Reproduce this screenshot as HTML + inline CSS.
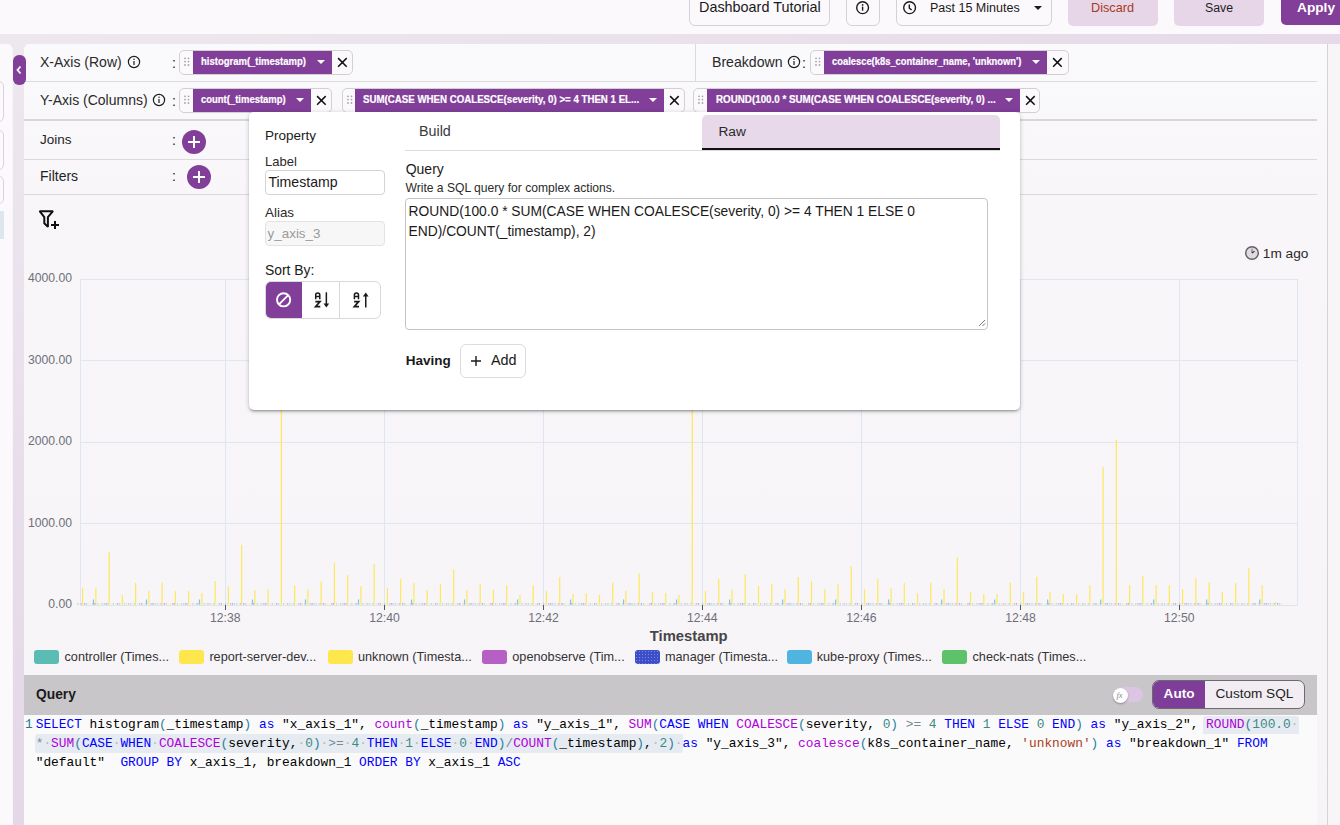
<!DOCTYPE html>
<html><head><meta charset="utf-8">
<style>
*{box-sizing:border-box;margin:0;padding:0}
html,body{width:1340px;height:825px;overflow:hidden;background:#f8f5f9;font-family:"Liberation Sans",sans-serif;color:#1f1f1f;position:relative}
.a{position:absolute}
.t{position:absolute;white-space:nowrap;line-height:1}
.btn{position:absolute;border:1px solid #d6d0d8;border-radius:6px;background:#fbf9fc}
.row{position:absolute;left:24px;width:1293px;border-bottom:1px solid #d9d6da}
.chip{position:absolute;height:25px;border:1px solid #d3d0d4;border-radius:5px;background:#fbf9fc}
.chip .p{position:absolute;top:0;bottom:0;background:#813f99}
.chip .ct{position:absolute;color:#fff;font-weight:bold;white-space:nowrap;line-height:1;-webkit-text-stroke:0.2px #fff}
.dh{position:absolute;width:6px;height:9px;top:6.5px}
.dh i{position:absolute;width:1.6px;height:1.6px;background:#a9a5aa;border-radius:1px}
.plus{position:absolute;width:24px;height:24px;border-radius:50%;background:#813f99}
.plus:before,.plus:after{content:"";position:absolute;background:#fff;left:50%;top:50%}
.plus:before{width:12px;height:2px;margin:-1px 0 0 -6px}
.plus:after{width:2px;height:12px;margin:-6px 0 0 -1px}
.code{position:absolute;left:35px;top:715.5px;font-family:"Liberation Mono",monospace;font-size:12.8px;line-height:19px;white-space:pre;color:#000}
.k{color:#0000ff}.f{color:#af00db}.n{color:#3b8a86}.s{color:#ad3c1a}.b1{color:#0431fa}.b2{color:#319331}.b3{color:#7b3814}.op{color:#000}
.ws{color:#b9b9b9}.o{color:#778899}.pr{color:#2b7fa0}
</style></head><body>

<!-- header -->
<div class="a" style="left:0;top:0;width:1340px;height:34px;background:#fbf9fc"></div>
<div class="btn" style="left:689px;top:-10px;width:141px;height:36px"></div>
<div class="t" style="left:699px;top:0.1px;font-size:14.4px;color:#1a1a1a">Dashboard Tutorial</div>
<div class="btn" style="left:846px;top:-10px;width:34px;height:36px"></div>
<svg class="a" style="left:855px;top:0px" width="16" height="16" viewBox="0 0 16 16"><circle cx="7.6" cy="7.7" r="5.9" fill="none" stroke="#1a1a1a" stroke-width="1.4"/><rect x="6.9" y="6.6" width="1.4" height="4.1" fill="#1a1a1a"/><circle cx="7.6" cy="4.9" r="0.85" fill="#1a1a1a"/></svg>
<div class="btn" style="left:896px;top:-10px;width:156px;height:36px"></div>
<svg class="a" style="left:902px;top:0px" width="16" height="16" viewBox="0 0 16 16"><circle cx="7.6" cy="7.7" r="5.9" fill="none" stroke="#1a1a1a" stroke-width="1.4"/><path d="M7.3 4.4v3.8l2.3 1.7" fill="none" stroke="#1a1a1a" stroke-width="1.4"/></svg>
<div class="t" style="left:930px;top:1.8px;font-size:12.5px;color:#1a1a1a">Past 15 Minutes</div>
<div class="a" style="left:1034px;top:6px;width:0;height:0;border-left:4px solid transparent;border-right:4px solid transparent;border-top:4px solid #1a1a1a"></div>
<div class="a" style="left:1068px;top:-10px;width:90px;height:36px;background:#e6d6e8;border-radius:5px"></div>
<div class="t" style="left:1091px;top:1.6px;font-size:12.7px;color:#a83a1e">Discard</div>
<div class="a" style="left:1174px;top:-10px;width:90px;height:36px;background:#e6d6e8;border-radius:5px"></div>
<div class="t" style="left:1205px;top:2px;font-size:12.3px;color:#1f1f1f">Save</div>
<div class="a" style="left:1281px;top:-10px;width:80px;height:35px;background:#813f99;border-radius:5px"></div>
<div class="t" style="left:1297px;top:1.0px;font-size:13.7px;color:#fff;font-weight:bold">Apply</div>

<!-- lilac band -->
<div class="a" style="left:0;top:34px;width:1340px;height:10px;background:linear-gradient(90deg,#ede8ee,#e6dae8)"></div>

<!-- left side boxes -->
<div class="a" style="left:-10px;top:44px;width:22px;height:781px;background:#fbf9fc;border-top-right-radius:6px"></div>
<div class="a" style="left:-10px;top:81px;width:14px;height:41px;border:1px solid #d9d4da;border-radius:5px;background:#fbf9fc"></div>
<div class="a" style="left:-10px;top:130px;width:14px;height:40px;border:1px solid #d9d4da;border-radius:5px;background:#fbf9fc"></div>
<div class="a" style="left:-10px;top:176px;width:14px;height:28px;border:1px solid #d9d4da;border-radius:5px;background:#fbf9fc"></div>
<div class="a" style="left:0;top:211px;width:4px;height:28px;background:#dde6ee"></div>

<!-- splitter -->
<div class="a" style="left:13px;top:44px;width:11px;height:781px;background:linear-gradient(#ede7ee,#e4d7e8)"></div>
<div class="a" style="left:10px;top:44px;width:17px;height:5px;background:#ede8ee;clip-path:polygon(0 0,100% 0,82% 100%,18% 100%)"></div>
<div class="a" style="left:12.5px;top:54.7px;width:13px;height:30px;background:#813f99;border-radius:6px;z-index:5"></div>
<svg class="a" style="left:15px;top:64px;z-index:6" width="8" height="12" viewBox="0 0 8 12"><path d="M5.5 2.5L2.5 6l3 3.5" fill="none" stroke="#fff" stroke-width="1.8"/></svg>

<!-- main panel -->
<div class="a" style="left:24px;top:44px;width:1303px;height:781px;background:linear-gradient(#faf9fb 0,#f8f6f9 160px,#f7f4f8 100%);border-top-left-radius:6px"></div>
<div class="a" style="left:1327px;top:44px;width:1px;height:781px;background:#d6d3d7"></div>

<!-- rows -->
<div class="a" style="left:24px;top:81px;width:1293px;height:1px;background:#dcd9dd"></div>
<div class="a" style="left:24px;top:119px;width:1293px;height:2px;background:#d9d6da"></div>
<div class="a" style="left:24px;top:159px;width:1293px;height:1px;background:#dcd9dd"></div>
<div class="a" style="left:24px;top:194px;width:1293px;height:1px;background:#dcd9dd"></div>
<div class="a" style="left:695px;top:44px;width:1px;height:37px;background:#dcd9dd"></div>

<div class="t" style="left:40px;top:55px;font-size:14px;color:#2a2a2a">X-Axis (Row)</div>
<svg class="a" style="left:127px;top:55px" width="14" height="14" viewBox="0 0 14 14"><circle cx="7" cy="7" r="5.6" fill="none" stroke="#1f1f1f" stroke-width="1.2"/><rect x="6.4" y="6" width="1.2" height="4" fill="#1f1f1f"/><circle cx="7" cy="4.3" r="0.75" fill="#1f1f1f"/></svg>
<div class="t" style="left:172px;top:56px;font-size:14px">:</div>

<div class="t" style="left:40px;top:92.8px;font-size:14px;color:#2a2a2a">Y-Axis (Columns)</div>
<svg class="a" style="left:152px;top:93px" width="14" height="14" viewBox="0 0 14 14"><circle cx="7" cy="7" r="5.6" fill="none" stroke="#1f1f1f" stroke-width="1.2"/><rect x="6.4" y="6" width="1.2" height="4" fill="#1f1f1f"/><circle cx="7" cy="4.3" r="0.75" fill="#1f1f1f"/></svg>
<div class="t" style="left:172px;top:93.6px;font-size:14px">:</div>

<div class="t" style="left:40px;top:132.8px;font-size:13.5px;color:#1f1f1f">Joins</div>
<div class="t" style="left:172px;top:132.8px;font-size:14px">:</div>
<div class="plus" style="left:182px;top:130px"></div>

<div class="t" style="left:40px;top:169.4px;font-size:14px;color:#1f1f1f">Filters</div>
<div class="t" style="left:172px;top:169.4px;font-size:14px">:</div>
<div class="plus" style="left:187px;top:165px"></div>

<!-- filter icon -->
<svg class="a" style="left:37px;top:208px" width="24" height="24" viewBox="0 0 24 24"><path d="M2.6 3.2h13.4l-5.1 5.9v9.8l-3.6-3.6V9.1z" fill="none" stroke="#111" stroke-width="2" stroke-linejoin="miter" stroke-miterlimit="2.2"/><path d="M18 13v8M14 17h8" stroke="#111" stroke-width="2"/></svg>

<!-- breakdown label -->
<div class="t" style="left:712px;top:55px;font-size:14.1px;color:#2a2a2a">Breakdown</div>
<svg class="a" style="left:787px;top:55px" width="14" height="14" viewBox="0 0 14 14"><circle cx="7" cy="7" r="5.6" fill="none" stroke="#1f1f1f" stroke-width="1.2"/><rect x="6.4" y="6" width="1.2" height="4" fill="#1f1f1f"/><circle cx="7" cy="4.3" r="0.75" fill="#1f1f1f"/></svg>
<div class="t" style="left:802px;top:56px;font-size:14px">:</div>

<!-- CHIPS -->
<div class="chip" style="left:179px;top:50px;width:174px">
<svg class="a" style="left:4px;top:6px" width="7" height="10" viewBox="0 0 7 10"><g fill="#a8a4a9"><circle cx="1" cy="1.3" r="0.9"/><circle cx="4.5" cy="1.3" r="0.9"/><circle cx="1" cy="4.6" r="0.9"/><circle cx="4.5" cy="4.6" r="0.9"/><circle cx="1" cy="8" r="0.9"/><circle cx="4.5" cy="8" r="0.9"/></g></svg>
<div class="p" style="left:13px;width:139px"></div>
<div class="ct" style="left:21px;top:5.4px;font-size:10.5px;transform:scaleX(0.904);transform-origin:0 0">histogram(_timestamp)</div>
<div class="a" style="left:137px;top:9px;width:0;height:0;border-left:4px solid transparent;border-right:4px solid transparent;border-top:4px solid #fff"></div>
<svg class="a" style="left:157px;top:6px" width="11" height="11" viewBox="0 0 11 11"><path d="M1.1 1.1L9.7 9.7M9.7 1.1L1.1 9.7" stroke="#111" stroke-width="1.5"/></svg>
</div>
<div class="chip" style="left:179px;top:88px;width:153px">
<svg class="a" style="left:4px;top:6px" width="7" height="10" viewBox="0 0 7 10"><g fill="#a8a4a9"><circle cx="1" cy="1.3" r="0.9"/><circle cx="4.5" cy="1.3" r="0.9"/><circle cx="1" cy="4.6" r="0.9"/><circle cx="4.5" cy="4.6" r="0.9"/><circle cx="1" cy="8" r="0.9"/><circle cx="4.5" cy="8" r="0.9"/></g></svg>
<div class="p" style="left:13px;width:118px"></div>
<div class="ct" style="left:21px;top:5.4px;font-size:10.5px;transform:scaleX(0.902);transform-origin:0 0">count(_timestamp)</div>
<div class="a" style="left:116px;top:9px;width:0;height:0;border-left:4px solid transparent;border-right:4px solid transparent;border-top:4px solid #fff"></div>
<svg class="a" style="left:136px;top:6px" width="11" height="11" viewBox="0 0 11 11"><path d="M1.1 1.1L9.7 9.7M9.7 1.1L1.1 9.7" stroke="#111" stroke-width="1.5"/></svg>
</div>
<div class="chip" style="left:342px;top:88px;width:343px">
<svg class="a" style="left:4px;top:6px" width="7" height="10" viewBox="0 0 7 10"><g fill="#a8a4a9"><circle cx="1" cy="1.3" r="0.9"/><circle cx="4.5" cy="1.3" r="0.9"/><circle cx="1" cy="4.6" r="0.9"/><circle cx="4.5" cy="4.6" r="0.9"/><circle cx="1" cy="8" r="0.9"/><circle cx="4.5" cy="8" r="0.9"/></g></svg>
<div class="p" style="left:12px;width:309px"></div>
<div class="ct" style="left:20px;top:5.4px;font-size:10.5px;transform:scaleX(0.923);transform-origin:0 0">SUM(CASE WHEN COALESCE(severity, 0) &gt;= 4 THEN 1 EL...</div>
<div class="a" style="left:306px;top:9px;width:0;height:0;border-left:4px solid transparent;border-right:4px solid transparent;border-top:4px solid #fff"></div>
<svg class="a" style="left:326px;top:6px" width="11" height="11" viewBox="0 0 11 11"><path d="M1.1 1.1L9.7 9.7M9.7 1.1L1.1 9.7" stroke="#111" stroke-width="1.5"/></svg>
</div>
<div class="chip" style="left:693px;top:88px;width:347px">
<svg class="a" style="left:4px;top:6px" width="7" height="10" viewBox="0 0 7 10"><g fill="#a8a4a9"><circle cx="1" cy="1.3" r="0.9"/><circle cx="4.5" cy="1.3" r="0.9"/><circle cx="1" cy="4.6" r="0.9"/><circle cx="4.5" cy="4.6" r="0.9"/><circle cx="1" cy="8" r="0.9"/><circle cx="4.5" cy="8" r="0.9"/></g></svg>
<div class="p" style="left:13px;width:313px"></div>
<div class="ct" style="left:21.5px;top:5.4px;font-size:10.5px;transform:scaleX(0.933);transform-origin:0 0">ROUND(100.0 * SUM(CASE WHEN COALESCE(severity, 0) ...</div>
<div class="a" style="left:311px;top:9px;width:0;height:0;border-left:4px solid transparent;border-right:4px solid transparent;border-top:4px solid #fff"></div>
<svg class="a" style="left:331px;top:6px" width="11" height="11" viewBox="0 0 11 11"><path d="M1.1 1.1L9.7 9.7M9.7 1.1L1.1 9.7" stroke="#111" stroke-width="1.5"/></svg>
</div>
<div class="chip" style="left:810px;top:50px;width:259px">
<svg class="a" style="left:4px;top:6px" width="7" height="10" viewBox="0 0 7 10"><g fill="#a8a4a9"><circle cx="1" cy="1.3" r="0.9"/><circle cx="4.5" cy="1.3" r="0.9"/><circle cx="1" cy="4.6" r="0.9"/><circle cx="4.5" cy="4.6" r="0.9"/><circle cx="1" cy="8" r="0.9"/><circle cx="4.5" cy="8" r="0.9"/></g></svg>
<div class="p" style="left:13px;width:223px"></div>
<div class="ct" style="left:21.399999999999977px;top:5.4px;font-size:10.5px;transform:scaleX(0.893);transform-origin:0 0">coalesce(k8s_container_name, 'unknown')</div>
<div class="a" style="left:221px;top:9px;width:0;height:0;border-left:4px solid transparent;border-right:4px solid transparent;border-top:4px solid #fff"></div>
<svg class="a" style="left:241px;top:6px" width="11" height="11" viewBox="0 0 11 11"><path d="M1.1 1.1L9.7 9.7M9.7 1.1L1.1 9.7" stroke="#111" stroke-width="1.5"/></svg>
</div>
<!-- /CHIPS -->

<!-- CHART -->
<svg class="a" style="left:0;top:0" width="1340" height="825" viewBox="0 0 1340 825">
<line x1="80" y1="279.5" x2="1297.5" y2="279.5" stroke="#e0e6f1" stroke-width="1"/>
<line x1="80" y1="360.5" x2="1297.5" y2="360.5" stroke="#e0e6f1" stroke-width="1"/>
<line x1="80" y1="442.5" x2="1297.5" y2="442.5" stroke="#e0e6f1" stroke-width="1"/>
<line x1="80" y1="523.5" x2="1297.5" y2="523.5" stroke="#e0e6f1" stroke-width="1"/>
<line x1="80.5" y1="279" x2="80.5" y2="605" stroke="#e0e6f1" stroke-width="1"/>
<line x1="225.5" y1="279" x2="225.5" y2="605" stroke="#e0e6f1" stroke-width="1"/>
<line x1="384.5" y1="279" x2="384.5" y2="605" stroke="#e0e6f1" stroke-width="1"/>
<line x1="543.5" y1="279" x2="543.5" y2="605" stroke="#e0e6f1" stroke-width="1"/>
<line x1="702.5" y1="279" x2="702.5" y2="605" stroke="#e0e6f1" stroke-width="1"/>
<line x1="861.5" y1="279" x2="861.5" y2="605" stroke="#e0e6f1" stroke-width="1"/>
<line x1="1020.5" y1="279" x2="1020.5" y2="605" stroke="#e0e6f1" stroke-width="1"/>
<line x1="1179.5" y1="279" x2="1179.5" y2="605" stroke="#e0e6f1" stroke-width="1"/>
<line x1="1297.5" y1="279" x2="1297.5" y2="605" stroke="#e0e6f1" stroke-width="1"/>
<rect x="82.00" y="587.8" width="1.2" height="16.7" fill="#fde85a"/>
<rect x="77.10" y="603.3" width="1.3" height="1.2" fill="#4db3e0" opacity="0.55"/>
<rect x="79.10" y="603.3" width="1.3" height="1.2" fill="#fde74c" opacity="0.55"/>
<rect x="80.80" y="603.3" width="1.3" height="1.2" fill="#b65fc4" opacity="0.55"/>
<rect x="84.10" y="603.3" width="1.3" height="1.2" fill="#3a4fc8" opacity="0.55"/>
<rect x="86.10" y="603.3" width="1.3" height="1.2" fill="#5bbcb3" opacity="0.55"/>
<rect x="88.10" y="603.3" width="1.3" height="1.2" fill="#fde74c" opacity="0.55"/>
<rect x="95.25" y="587.8" width="1.2" height="16.7" fill="#fde85a"/>
<rect x="90.35" y="603.3" width="1.3" height="1.2" fill="#fde74c" opacity="0.55"/>
<rect x="92.35" y="603.3" width="1.3" height="1.2" fill="#b65fc4" opacity="0.55"/>
<rect x="94.05" y="603.3" width="1.3" height="1.2" fill="#3a4fc8" opacity="0.55"/>
<rect x="97.35" y="603.3" width="1.3" height="1.2" fill="#5bbcb3" opacity="0.55"/>
<rect x="99.35" y="603.3" width="1.3" height="1.2" fill="#fde74c" opacity="0.55"/>
<rect x="101.35" y="603.3" width="1.3" height="1.2" fill="#4db3e0" opacity="0.55"/>
<rect x="92.85" y="599.5" width="1.2" height="5" fill="#7cc7e6"/>
<rect x="108.51" y="551.5" width="1.2" height="53.0" fill="#fde85a"/>
<rect x="103.61" y="603.3" width="1.3" height="1.2" fill="#b65fc4" opacity="0.55"/>
<rect x="105.61" y="603.3" width="1.3" height="1.2" fill="#3a4fc8" opacity="0.55"/>
<rect x="107.31" y="603.3" width="1.3" height="1.2" fill="#5bbcb3" opacity="0.55"/>
<rect x="110.61" y="603.3" width="1.3" height="1.2" fill="#fde74c" opacity="0.55"/>
<rect x="112.61" y="603.3" width="1.3" height="1.2" fill="#4db3e0" opacity="0.55"/>
<rect x="114.61" y="603.3" width="1.3" height="1.2" fill="#fde74c" opacity="0.55"/>
<rect x="121.76" y="595.2" width="1.2" height="9.3" fill="#fde85a"/>
<rect x="116.86" y="603.3" width="1.3" height="1.2" fill="#3a4fc8" opacity="0.55"/>
<rect x="118.86" y="603.3" width="1.3" height="1.2" fill="#5bbcb3" opacity="0.55"/>
<rect x="120.56" y="603.3" width="1.3" height="1.2" fill="#fde74c" opacity="0.55"/>
<rect x="123.86" y="603.3" width="1.3" height="1.2" fill="#4db3e0" opacity="0.55"/>
<rect x="125.86" y="603.3" width="1.3" height="1.2" fill="#fde74c" opacity="0.55"/>
<rect x="127.86" y="603.3" width="1.3" height="1.2" fill="#b65fc4" opacity="0.55"/>
<rect x="135.01" y="582.8" width="1.2" height="21.7" fill="#fde85a"/>
<rect x="130.11" y="603.3" width="1.3" height="1.2" fill="#5bbcb3" opacity="0.55"/>
<rect x="132.11" y="603.3" width="1.3" height="1.2" fill="#fde74c" opacity="0.55"/>
<rect x="133.81" y="603.3" width="1.3" height="1.2" fill="#4db3e0" opacity="0.55"/>
<rect x="137.11" y="603.3" width="1.3" height="1.2" fill="#fde74c" opacity="0.55"/>
<rect x="139.11" y="603.3" width="1.3" height="1.2" fill="#b65fc4" opacity="0.55"/>
<rect x="141.11" y="603.3" width="1.3" height="1.2" fill="#3a4fc8" opacity="0.55"/>
<rect x="148.27" y="590.9" width="1.2" height="13.6" fill="#fde85a"/>
<rect x="143.37" y="603.3" width="1.3" height="1.2" fill="#fde74c" opacity="0.55"/>
<rect x="145.37" y="603.3" width="1.3" height="1.2" fill="#4db3e0" opacity="0.55"/>
<rect x="147.06" y="603.3" width="1.3" height="1.2" fill="#fde74c" opacity="0.55"/>
<rect x="150.37" y="603.3" width="1.3" height="1.2" fill="#b65fc4" opacity="0.55"/>
<rect x="152.37" y="603.3" width="1.3" height="1.2" fill="#3a4fc8" opacity="0.55"/>
<rect x="154.37" y="603.3" width="1.3" height="1.2" fill="#5bbcb3" opacity="0.55"/>
<rect x="145.87" y="599.5" width="1.2" height="5" fill="#7cc7e6"/>
<rect x="161.52" y="582.4" width="1.2" height="22.1" fill="#fde85a"/>
<rect x="156.62" y="603.3" width="1.3" height="1.2" fill="#4db3e0" opacity="0.55"/>
<rect x="158.62" y="603.3" width="1.3" height="1.2" fill="#fde74c" opacity="0.55"/>
<rect x="160.32" y="603.3" width="1.3" height="1.2" fill="#b65fc4" opacity="0.55"/>
<rect x="163.62" y="603.3" width="1.3" height="1.2" fill="#3a4fc8" opacity="0.55"/>
<rect x="165.62" y="603.3" width="1.3" height="1.2" fill="#5bbcb3" opacity="0.55"/>
<rect x="167.62" y="603.3" width="1.3" height="1.2" fill="#fde74c" opacity="0.55"/>
<rect x="174.77" y="591.1" width="1.2" height="13.4" fill="#fde85a"/>
<rect x="169.87" y="603.3" width="1.3" height="1.2" fill="#fde74c" opacity="0.55"/>
<rect x="171.87" y="603.3" width="1.3" height="1.2" fill="#b65fc4" opacity="0.55"/>
<rect x="173.57" y="603.3" width="1.3" height="1.2" fill="#3a4fc8" opacity="0.55"/>
<rect x="176.87" y="603.3" width="1.3" height="1.2" fill="#5bbcb3" opacity="0.55"/>
<rect x="178.87" y="603.3" width="1.3" height="1.2" fill="#fde74c" opacity="0.55"/>
<rect x="180.87" y="603.3" width="1.3" height="1.2" fill="#4db3e0" opacity="0.55"/>
<rect x="188.02" y="591.1" width="1.2" height="13.4" fill="#fde85a"/>
<rect x="183.12" y="603.3" width="1.3" height="1.2" fill="#b65fc4" opacity="0.55"/>
<rect x="185.12" y="603.3" width="1.3" height="1.2" fill="#3a4fc8" opacity="0.55"/>
<rect x="186.82" y="603.3" width="1.3" height="1.2" fill="#5bbcb3" opacity="0.55"/>
<rect x="190.12" y="603.3" width="1.3" height="1.2" fill="#fde74c" opacity="0.55"/>
<rect x="192.12" y="603.3" width="1.3" height="1.2" fill="#4db3e0" opacity="0.55"/>
<rect x="194.12" y="603.3" width="1.3" height="1.2" fill="#fde74c" opacity="0.55"/>
<rect x="201.28" y="593.1" width="1.2" height="11.4" fill="#fde85a"/>
<rect x="196.38" y="603.3" width="1.3" height="1.2" fill="#3a4fc8" opacity="0.55"/>
<rect x="198.38" y="603.3" width="1.3" height="1.2" fill="#5bbcb3" opacity="0.55"/>
<rect x="200.08" y="603.3" width="1.3" height="1.2" fill="#fde74c" opacity="0.55"/>
<rect x="203.38" y="603.3" width="1.3" height="1.2" fill="#4db3e0" opacity="0.55"/>
<rect x="205.38" y="603.3" width="1.3" height="1.2" fill="#fde74c" opacity="0.55"/>
<rect x="207.38" y="603.3" width="1.3" height="1.2" fill="#b65fc4" opacity="0.55"/>
<rect x="198.88" y="599.5" width="1.2" height="5" fill="#7cc7e6"/>
<rect x="214.53" y="581.0" width="1.2" height="23.5" fill="#fde85a"/>
<rect x="209.63" y="603.3" width="1.3" height="1.2" fill="#5bbcb3" opacity="0.55"/>
<rect x="211.63" y="603.3" width="1.3" height="1.2" fill="#fde74c" opacity="0.55"/>
<rect x="213.33" y="603.3" width="1.3" height="1.2" fill="#4db3e0" opacity="0.55"/>
<rect x="216.63" y="603.3" width="1.3" height="1.2" fill="#fde74c" opacity="0.55"/>
<rect x="218.63" y="603.3" width="1.3" height="1.2" fill="#b65fc4" opacity="0.55"/>
<rect x="220.63" y="603.3" width="1.3" height="1.2" fill="#3a4fc8" opacity="0.55"/>
<rect x="227.78" y="586.2" width="1.2" height="18.3" fill="#fde85a"/>
<rect x="222.88" y="603.3" width="1.3" height="1.2" fill="#fde74c" opacity="0.55"/>
<rect x="224.88" y="603.3" width="1.3" height="1.2" fill="#4db3e0" opacity="0.55"/>
<rect x="226.58" y="603.3" width="1.3" height="1.2" fill="#fde74c" opacity="0.55"/>
<rect x="229.88" y="603.3" width="1.3" height="1.2" fill="#b65fc4" opacity="0.55"/>
<rect x="231.88" y="603.3" width="1.3" height="1.2" fill="#3a4fc8" opacity="0.55"/>
<rect x="233.88" y="603.3" width="1.3" height="1.2" fill="#5bbcb3" opacity="0.55"/>
<rect x="241.04" y="544.8" width="1.2" height="59.7" fill="#fde85a"/>
<rect x="236.14" y="603.3" width="1.3" height="1.2" fill="#4db3e0" opacity="0.55"/>
<rect x="238.14" y="603.3" width="1.3" height="1.2" fill="#fde74c" opacity="0.55"/>
<rect x="239.84" y="603.3" width="1.3" height="1.2" fill="#b65fc4" opacity="0.55"/>
<rect x="243.14" y="603.3" width="1.3" height="1.2" fill="#3a4fc8" opacity="0.55"/>
<rect x="245.14" y="603.3" width="1.3" height="1.2" fill="#5bbcb3" opacity="0.55"/>
<rect x="247.14" y="603.3" width="1.3" height="1.2" fill="#fde74c" opacity="0.55"/>
<rect x="254.29" y="590.1" width="1.2" height="14.4" fill="#fde85a"/>
<rect x="249.39" y="603.3" width="1.3" height="1.2" fill="#fde74c" opacity="0.55"/>
<rect x="251.39" y="603.3" width="1.3" height="1.2" fill="#b65fc4" opacity="0.55"/>
<rect x="253.09" y="603.3" width="1.3" height="1.2" fill="#3a4fc8" opacity="0.55"/>
<rect x="256.39" y="603.3" width="1.3" height="1.2" fill="#5bbcb3" opacity="0.55"/>
<rect x="258.39" y="603.3" width="1.3" height="1.2" fill="#fde74c" opacity="0.55"/>
<rect x="260.39" y="603.3" width="1.3" height="1.2" fill="#4db3e0" opacity="0.55"/>
<rect x="251.89" y="599.5" width="1.2" height="5" fill="#7cc7e6"/>
<rect x="267.54" y="589.2" width="1.2" height="15.3" fill="#fde85a"/>
<rect x="262.64" y="603.3" width="1.3" height="1.2" fill="#b65fc4" opacity="0.55"/>
<rect x="264.64" y="603.3" width="1.3" height="1.2" fill="#3a4fc8" opacity="0.55"/>
<rect x="266.34" y="603.3" width="1.3" height="1.2" fill="#5bbcb3" opacity="0.55"/>
<rect x="269.64" y="603.3" width="1.3" height="1.2" fill="#fde74c" opacity="0.55"/>
<rect x="271.64" y="603.3" width="1.3" height="1.2" fill="#4db3e0" opacity="0.55"/>
<rect x="273.64" y="603.3" width="1.3" height="1.2" fill="#fde74c" opacity="0.55"/>
<rect x="280.79" y="380.0" width="1.2" height="224.5" fill="#fde85a"/>
<rect x="275.89" y="603.3" width="1.3" height="1.2" fill="#3a4fc8" opacity="0.55"/>
<rect x="277.89" y="603.3" width="1.3" height="1.2" fill="#5bbcb3" opacity="0.55"/>
<rect x="279.59" y="603.3" width="1.3" height="1.2" fill="#fde74c" opacity="0.55"/>
<rect x="282.89" y="603.3" width="1.3" height="1.2" fill="#4db3e0" opacity="0.55"/>
<rect x="284.89" y="603.3" width="1.3" height="1.2" fill="#fde74c" opacity="0.55"/>
<rect x="286.89" y="603.3" width="1.3" height="1.2" fill="#b65fc4" opacity="0.55"/>
<rect x="294.05" y="585.4" width="1.2" height="19.1" fill="#fde85a"/>
<rect x="289.15" y="603.3" width="1.3" height="1.2" fill="#5bbcb3" opacity="0.55"/>
<rect x="291.15" y="603.3" width="1.3" height="1.2" fill="#fde74c" opacity="0.55"/>
<rect x="292.85" y="603.3" width="1.3" height="1.2" fill="#4db3e0" opacity="0.55"/>
<rect x="296.15" y="603.3" width="1.3" height="1.2" fill="#fde74c" opacity="0.55"/>
<rect x="298.15" y="603.3" width="1.3" height="1.2" fill="#b65fc4" opacity="0.55"/>
<rect x="300.15" y="603.3" width="1.3" height="1.2" fill="#3a4fc8" opacity="0.55"/>
<rect x="307.30" y="589.2" width="1.2" height="15.3" fill="#fde85a"/>
<rect x="302.40" y="603.3" width="1.3" height="1.2" fill="#fde74c" opacity="0.55"/>
<rect x="304.40" y="603.3" width="1.3" height="1.2" fill="#4db3e0" opacity="0.55"/>
<rect x="306.10" y="603.3" width="1.3" height="1.2" fill="#fde74c" opacity="0.55"/>
<rect x="309.40" y="603.3" width="1.3" height="1.2" fill="#b65fc4" opacity="0.55"/>
<rect x="311.40" y="603.3" width="1.3" height="1.2" fill="#3a4fc8" opacity="0.55"/>
<rect x="313.40" y="603.3" width="1.3" height="1.2" fill="#5bbcb3" opacity="0.55"/>
<rect x="304.90" y="599.5" width="1.2" height="5" fill="#7cc7e6"/>
<rect x="320.55" y="581.4" width="1.2" height="23.1" fill="#fde85a"/>
<rect x="315.65" y="603.3" width="1.3" height="1.2" fill="#4db3e0" opacity="0.55"/>
<rect x="317.65" y="603.3" width="1.3" height="1.2" fill="#fde74c" opacity="0.55"/>
<rect x="319.35" y="603.3" width="1.3" height="1.2" fill="#b65fc4" opacity="0.55"/>
<rect x="322.65" y="603.3" width="1.3" height="1.2" fill="#3a4fc8" opacity="0.55"/>
<rect x="324.65" y="603.3" width="1.3" height="1.2" fill="#5bbcb3" opacity="0.55"/>
<rect x="326.65" y="603.3" width="1.3" height="1.2" fill="#fde74c" opacity="0.55"/>
<rect x="333.81" y="562.7" width="1.2" height="41.8" fill="#fde85a"/>
<rect x="328.91" y="603.3" width="1.3" height="1.2" fill="#fde74c" opacity="0.55"/>
<rect x="330.91" y="603.3" width="1.3" height="1.2" fill="#b65fc4" opacity="0.55"/>
<rect x="332.61" y="603.3" width="1.3" height="1.2" fill="#3a4fc8" opacity="0.55"/>
<rect x="335.91" y="603.3" width="1.3" height="1.2" fill="#5bbcb3" opacity="0.55"/>
<rect x="337.91" y="603.3" width="1.3" height="1.2" fill="#fde74c" opacity="0.55"/>
<rect x="339.91" y="603.3" width="1.3" height="1.2" fill="#4db3e0" opacity="0.55"/>
<rect x="347.06" y="575.1" width="1.2" height="29.4" fill="#fde85a"/>
<rect x="342.16" y="603.3" width="1.3" height="1.2" fill="#b65fc4" opacity="0.55"/>
<rect x="344.16" y="603.3" width="1.3" height="1.2" fill="#3a4fc8" opacity="0.55"/>
<rect x="345.86" y="603.3" width="1.3" height="1.2" fill="#5bbcb3" opacity="0.55"/>
<rect x="349.16" y="603.3" width="1.3" height="1.2" fill="#fde74c" opacity="0.55"/>
<rect x="351.16" y="603.3" width="1.3" height="1.2" fill="#4db3e0" opacity="0.55"/>
<rect x="353.16" y="603.3" width="1.3" height="1.2" fill="#fde74c" opacity="0.55"/>
<rect x="360.31" y="586.1" width="1.2" height="18.4" fill="#fde85a"/>
<rect x="355.41" y="603.3" width="1.3" height="1.2" fill="#3a4fc8" opacity="0.55"/>
<rect x="357.41" y="603.3" width="1.3" height="1.2" fill="#5bbcb3" opacity="0.55"/>
<rect x="359.11" y="603.3" width="1.3" height="1.2" fill="#fde74c" opacity="0.55"/>
<rect x="362.41" y="603.3" width="1.3" height="1.2" fill="#4db3e0" opacity="0.55"/>
<rect x="364.41" y="603.3" width="1.3" height="1.2" fill="#fde74c" opacity="0.55"/>
<rect x="366.41" y="603.3" width="1.3" height="1.2" fill="#b65fc4" opacity="0.55"/>
<rect x="357.91" y="599.5" width="1.2" height="5" fill="#7cc7e6"/>
<rect x="373.57" y="564.1" width="1.2" height="40.4" fill="#fde85a"/>
<rect x="368.67" y="603.3" width="1.3" height="1.2" fill="#5bbcb3" opacity="0.55"/>
<rect x="370.67" y="603.3" width="1.3" height="1.2" fill="#fde74c" opacity="0.55"/>
<rect x="372.37" y="603.3" width="1.3" height="1.2" fill="#4db3e0" opacity="0.55"/>
<rect x="375.67" y="603.3" width="1.3" height="1.2" fill="#fde74c" opacity="0.55"/>
<rect x="377.67" y="603.3" width="1.3" height="1.2" fill="#b65fc4" opacity="0.55"/>
<rect x="379.67" y="603.3" width="1.3" height="1.2" fill="#3a4fc8" opacity="0.55"/>
<rect x="386.82" y="588.2" width="1.2" height="16.3" fill="#fde85a"/>
<rect x="381.92" y="603.3" width="1.3" height="1.2" fill="#fde74c" opacity="0.55"/>
<rect x="383.92" y="603.3" width="1.3" height="1.2" fill="#4db3e0" opacity="0.55"/>
<rect x="385.62" y="603.3" width="1.3" height="1.2" fill="#fde74c" opacity="0.55"/>
<rect x="388.92" y="603.3" width="1.3" height="1.2" fill="#b65fc4" opacity="0.55"/>
<rect x="390.92" y="603.3" width="1.3" height="1.2" fill="#3a4fc8" opacity="0.55"/>
<rect x="392.92" y="603.3" width="1.3" height="1.2" fill="#5bbcb3" opacity="0.55"/>
<rect x="400.07" y="579.1" width="1.2" height="25.4" fill="#fde85a"/>
<rect x="395.17" y="603.3" width="1.3" height="1.2" fill="#4db3e0" opacity="0.55"/>
<rect x="397.17" y="603.3" width="1.3" height="1.2" fill="#fde74c" opacity="0.55"/>
<rect x="398.87" y="603.3" width="1.3" height="1.2" fill="#b65fc4" opacity="0.55"/>
<rect x="402.17" y="603.3" width="1.3" height="1.2" fill="#3a4fc8" opacity="0.55"/>
<rect x="404.17" y="603.3" width="1.3" height="1.2" fill="#5bbcb3" opacity="0.55"/>
<rect x="406.17" y="603.3" width="1.3" height="1.2" fill="#fde74c" opacity="0.55"/>
<rect x="413.32" y="582.9" width="1.2" height="21.6" fill="#fde85a"/>
<rect x="408.42" y="603.3" width="1.3" height="1.2" fill="#fde74c" opacity="0.55"/>
<rect x="410.42" y="603.3" width="1.3" height="1.2" fill="#b65fc4" opacity="0.55"/>
<rect x="412.12" y="603.3" width="1.3" height="1.2" fill="#3a4fc8" opacity="0.55"/>
<rect x="415.42" y="603.3" width="1.3" height="1.2" fill="#5bbcb3" opacity="0.55"/>
<rect x="417.42" y="603.3" width="1.3" height="1.2" fill="#fde74c" opacity="0.55"/>
<rect x="419.42" y="603.3" width="1.3" height="1.2" fill="#4db3e0" opacity="0.55"/>
<rect x="410.92" y="599.5" width="1.2" height="5" fill="#7cc7e6"/>
<rect x="426.58" y="590.2" width="1.2" height="14.3" fill="#fde85a"/>
<rect x="421.68" y="603.3" width="1.3" height="1.2" fill="#b65fc4" opacity="0.55"/>
<rect x="423.68" y="603.3" width="1.3" height="1.2" fill="#3a4fc8" opacity="0.55"/>
<rect x="425.38" y="603.3" width="1.3" height="1.2" fill="#5bbcb3" opacity="0.55"/>
<rect x="428.68" y="603.3" width="1.3" height="1.2" fill="#fde74c" opacity="0.55"/>
<rect x="430.68" y="603.3" width="1.3" height="1.2" fill="#4db3e0" opacity="0.55"/>
<rect x="432.68" y="603.3" width="1.3" height="1.2" fill="#fde74c" opacity="0.55"/>
<rect x="439.83" y="584.2" width="1.2" height="20.3" fill="#fde85a"/>
<rect x="434.93" y="603.3" width="1.3" height="1.2" fill="#3a4fc8" opacity="0.55"/>
<rect x="436.93" y="603.3" width="1.3" height="1.2" fill="#5bbcb3" opacity="0.55"/>
<rect x="438.63" y="603.3" width="1.3" height="1.2" fill="#fde74c" opacity="0.55"/>
<rect x="441.93" y="603.3" width="1.3" height="1.2" fill="#4db3e0" opacity="0.55"/>
<rect x="443.93" y="603.3" width="1.3" height="1.2" fill="#fde74c" opacity="0.55"/>
<rect x="445.93" y="603.3" width="1.3" height="1.2" fill="#b65fc4" opacity="0.55"/>
<rect x="453.08" y="569.3" width="1.2" height="35.2" fill="#fde85a"/>
<rect x="448.18" y="603.3" width="1.3" height="1.2" fill="#5bbcb3" opacity="0.55"/>
<rect x="450.18" y="603.3" width="1.3" height="1.2" fill="#fde74c" opacity="0.55"/>
<rect x="451.88" y="603.3" width="1.3" height="1.2" fill="#4db3e0" opacity="0.55"/>
<rect x="455.18" y="603.3" width="1.3" height="1.2" fill="#fde74c" opacity="0.55"/>
<rect x="457.18" y="603.3" width="1.3" height="1.2" fill="#b65fc4" opacity="0.55"/>
<rect x="459.18" y="603.3" width="1.3" height="1.2" fill="#3a4fc8" opacity="0.55"/>
<rect x="466.34" y="590.1" width="1.2" height="14.4" fill="#fde85a"/>
<rect x="461.44" y="603.3" width="1.3" height="1.2" fill="#fde74c" opacity="0.55"/>
<rect x="463.44" y="603.3" width="1.3" height="1.2" fill="#4db3e0" opacity="0.55"/>
<rect x="465.14" y="603.3" width="1.3" height="1.2" fill="#fde74c" opacity="0.55"/>
<rect x="468.44" y="603.3" width="1.3" height="1.2" fill="#b65fc4" opacity="0.55"/>
<rect x="470.44" y="603.3" width="1.3" height="1.2" fill="#3a4fc8" opacity="0.55"/>
<rect x="472.44" y="603.3" width="1.3" height="1.2" fill="#5bbcb3" opacity="0.55"/>
<rect x="463.94" y="599.5" width="1.2" height="5" fill="#7cc7e6"/>
<rect x="479.59" y="584.1" width="1.2" height="20.4" fill="#fde85a"/>
<rect x="474.69" y="603.3" width="1.3" height="1.2" fill="#4db3e0" opacity="0.55"/>
<rect x="476.69" y="603.3" width="1.3" height="1.2" fill="#fde74c" opacity="0.55"/>
<rect x="478.39" y="603.3" width="1.3" height="1.2" fill="#b65fc4" opacity="0.55"/>
<rect x="481.69" y="603.3" width="1.3" height="1.2" fill="#3a4fc8" opacity="0.55"/>
<rect x="483.69" y="603.3" width="1.3" height="1.2" fill="#5bbcb3" opacity="0.55"/>
<rect x="485.69" y="603.3" width="1.3" height="1.2" fill="#fde74c" opacity="0.55"/>
<rect x="492.84" y="589.9" width="1.2" height="14.6" fill="#fde85a"/>
<rect x="487.94" y="603.3" width="1.3" height="1.2" fill="#fde74c" opacity="0.55"/>
<rect x="489.94" y="603.3" width="1.3" height="1.2" fill="#b65fc4" opacity="0.55"/>
<rect x="491.64" y="603.3" width="1.3" height="1.2" fill="#3a4fc8" opacity="0.55"/>
<rect x="494.94" y="603.3" width="1.3" height="1.2" fill="#5bbcb3" opacity="0.55"/>
<rect x="496.94" y="603.3" width="1.3" height="1.2" fill="#fde74c" opacity="0.55"/>
<rect x="498.94" y="603.3" width="1.3" height="1.2" fill="#4db3e0" opacity="0.55"/>
<rect x="506.10" y="585.2" width="1.2" height="19.3" fill="#fde85a"/>
<rect x="501.20" y="603.3" width="1.3" height="1.2" fill="#b65fc4" opacity="0.55"/>
<rect x="503.20" y="603.3" width="1.3" height="1.2" fill="#3a4fc8" opacity="0.55"/>
<rect x="504.90" y="603.3" width="1.3" height="1.2" fill="#5bbcb3" opacity="0.55"/>
<rect x="508.20" y="603.3" width="1.3" height="1.2" fill="#fde74c" opacity="0.55"/>
<rect x="510.20" y="603.3" width="1.3" height="1.2" fill="#4db3e0" opacity="0.55"/>
<rect x="512.20" y="603.3" width="1.3" height="1.2" fill="#fde74c" opacity="0.55"/>
<rect x="519.35" y="595.0" width="1.2" height="9.5" fill="#fde85a"/>
<rect x="514.45" y="603.3" width="1.3" height="1.2" fill="#3a4fc8" opacity="0.55"/>
<rect x="516.45" y="603.3" width="1.3" height="1.2" fill="#5bbcb3" opacity="0.55"/>
<rect x="518.15" y="603.3" width="1.3" height="1.2" fill="#fde74c" opacity="0.55"/>
<rect x="521.45" y="603.3" width="1.3" height="1.2" fill="#4db3e0" opacity="0.55"/>
<rect x="523.45" y="603.3" width="1.3" height="1.2" fill="#fde74c" opacity="0.55"/>
<rect x="525.45" y="603.3" width="1.3" height="1.2" fill="#b65fc4" opacity="0.55"/>
<rect x="516.95" y="599.5" width="1.2" height="5" fill="#7cc7e6"/>
<rect x="532.60" y="585.2" width="1.2" height="19.3" fill="#fde85a"/>
<rect x="527.70" y="603.3" width="1.3" height="1.2" fill="#5bbcb3" opacity="0.55"/>
<rect x="529.70" y="603.3" width="1.3" height="1.2" fill="#fde74c" opacity="0.55"/>
<rect x="531.40" y="603.3" width="1.3" height="1.2" fill="#4db3e0" opacity="0.55"/>
<rect x="534.70" y="603.3" width="1.3" height="1.2" fill="#fde74c" opacity="0.55"/>
<rect x="536.70" y="603.3" width="1.3" height="1.2" fill="#b65fc4" opacity="0.55"/>
<rect x="538.70" y="603.3" width="1.3" height="1.2" fill="#3a4fc8" opacity="0.55"/>
<rect x="545.86" y="591.2" width="1.2" height="13.3" fill="#fde85a"/>
<rect x="540.96" y="603.3" width="1.3" height="1.2" fill="#fde74c" opacity="0.55"/>
<rect x="542.96" y="603.3" width="1.3" height="1.2" fill="#4db3e0" opacity="0.55"/>
<rect x="544.66" y="603.3" width="1.3" height="1.2" fill="#fde74c" opacity="0.55"/>
<rect x="547.96" y="603.3" width="1.3" height="1.2" fill="#b65fc4" opacity="0.55"/>
<rect x="549.96" y="603.3" width="1.3" height="1.2" fill="#3a4fc8" opacity="0.55"/>
<rect x="551.96" y="603.3" width="1.3" height="1.2" fill="#5bbcb3" opacity="0.55"/>
<rect x="559.11" y="577.4" width="1.2" height="27.1" fill="#fde85a"/>
<rect x="554.21" y="603.3" width="1.3" height="1.2" fill="#4db3e0" opacity="0.55"/>
<rect x="556.21" y="603.3" width="1.3" height="1.2" fill="#fde74c" opacity="0.55"/>
<rect x="557.91" y="603.3" width="1.3" height="1.2" fill="#b65fc4" opacity="0.55"/>
<rect x="561.21" y="603.3" width="1.3" height="1.2" fill="#3a4fc8" opacity="0.55"/>
<rect x="563.21" y="603.3" width="1.3" height="1.2" fill="#5bbcb3" opacity="0.55"/>
<rect x="565.21" y="603.3" width="1.3" height="1.2" fill="#fde74c" opacity="0.55"/>
<rect x="572.36" y="593.9" width="1.2" height="10.6" fill="#fde85a"/>
<rect x="567.46" y="603.3" width="1.3" height="1.2" fill="#fde74c" opacity="0.55"/>
<rect x="569.46" y="603.3" width="1.3" height="1.2" fill="#b65fc4" opacity="0.55"/>
<rect x="571.16" y="603.3" width="1.3" height="1.2" fill="#3a4fc8" opacity="0.55"/>
<rect x="574.46" y="603.3" width="1.3" height="1.2" fill="#5bbcb3" opacity="0.55"/>
<rect x="576.46" y="603.3" width="1.3" height="1.2" fill="#fde74c" opacity="0.55"/>
<rect x="578.46" y="603.3" width="1.3" height="1.2" fill="#4db3e0" opacity="0.55"/>
<rect x="569.96" y="599.5" width="1.2" height="5" fill="#7cc7e6"/>
<rect x="585.61" y="593.2" width="1.2" height="11.3" fill="#fde85a"/>
<rect x="580.71" y="603.3" width="1.3" height="1.2" fill="#b65fc4" opacity="0.55"/>
<rect x="582.71" y="603.3" width="1.3" height="1.2" fill="#3a4fc8" opacity="0.55"/>
<rect x="584.41" y="603.3" width="1.3" height="1.2" fill="#5bbcb3" opacity="0.55"/>
<rect x="587.71" y="603.3" width="1.3" height="1.2" fill="#fde74c" opacity="0.55"/>
<rect x="589.71" y="603.3" width="1.3" height="1.2" fill="#4db3e0" opacity="0.55"/>
<rect x="591.71" y="603.3" width="1.3" height="1.2" fill="#fde74c" opacity="0.55"/>
<rect x="598.87" y="595.0" width="1.2" height="9.5" fill="#fde85a"/>
<rect x="593.97" y="603.3" width="1.3" height="1.2" fill="#3a4fc8" opacity="0.55"/>
<rect x="595.97" y="603.3" width="1.3" height="1.2" fill="#5bbcb3" opacity="0.55"/>
<rect x="597.67" y="603.3" width="1.3" height="1.2" fill="#fde74c" opacity="0.55"/>
<rect x="600.97" y="603.3" width="1.3" height="1.2" fill="#4db3e0" opacity="0.55"/>
<rect x="602.97" y="603.3" width="1.3" height="1.2" fill="#fde74c" opacity="0.55"/>
<rect x="604.97" y="603.3" width="1.3" height="1.2" fill="#b65fc4" opacity="0.55"/>
<rect x="612.12" y="582.7" width="1.2" height="21.8" fill="#fde85a"/>
<rect x="607.22" y="603.3" width="1.3" height="1.2" fill="#5bbcb3" opacity="0.55"/>
<rect x="609.22" y="603.3" width="1.3" height="1.2" fill="#fde74c" opacity="0.55"/>
<rect x="610.92" y="603.3" width="1.3" height="1.2" fill="#4db3e0" opacity="0.55"/>
<rect x="614.22" y="603.3" width="1.3" height="1.2" fill="#fde74c" opacity="0.55"/>
<rect x="616.22" y="603.3" width="1.3" height="1.2" fill="#b65fc4" opacity="0.55"/>
<rect x="618.22" y="603.3" width="1.3" height="1.2" fill="#3a4fc8" opacity="0.55"/>
<rect x="625.37" y="590.9" width="1.2" height="13.6" fill="#fde85a"/>
<rect x="620.47" y="603.3" width="1.3" height="1.2" fill="#fde74c" opacity="0.55"/>
<rect x="622.47" y="603.3" width="1.3" height="1.2" fill="#4db3e0" opacity="0.55"/>
<rect x="624.17" y="603.3" width="1.3" height="1.2" fill="#fde74c" opacity="0.55"/>
<rect x="627.47" y="603.3" width="1.3" height="1.2" fill="#b65fc4" opacity="0.55"/>
<rect x="629.47" y="603.3" width="1.3" height="1.2" fill="#3a4fc8" opacity="0.55"/>
<rect x="631.47" y="603.3" width="1.3" height="1.2" fill="#5bbcb3" opacity="0.55"/>
<rect x="622.97" y="599.5" width="1.2" height="5" fill="#7cc7e6"/>
<rect x="638.63" y="573.7" width="1.2" height="30.8" fill="#fde85a"/>
<rect x="633.73" y="603.3" width="1.3" height="1.2" fill="#4db3e0" opacity="0.55"/>
<rect x="635.73" y="603.3" width="1.3" height="1.2" fill="#fde74c" opacity="0.55"/>
<rect x="637.43" y="603.3" width="1.3" height="1.2" fill="#b65fc4" opacity="0.55"/>
<rect x="640.73" y="603.3" width="1.3" height="1.2" fill="#3a4fc8" opacity="0.55"/>
<rect x="642.73" y="603.3" width="1.3" height="1.2" fill="#5bbcb3" opacity="0.55"/>
<rect x="644.73" y="603.3" width="1.3" height="1.2" fill="#fde74c" opacity="0.55"/>
<rect x="651.88" y="592.1" width="1.2" height="12.4" fill="#fde85a"/>
<rect x="646.98" y="603.3" width="1.3" height="1.2" fill="#fde74c" opacity="0.55"/>
<rect x="648.98" y="603.3" width="1.3" height="1.2" fill="#b65fc4" opacity="0.55"/>
<rect x="650.68" y="603.3" width="1.3" height="1.2" fill="#3a4fc8" opacity="0.55"/>
<rect x="653.98" y="603.3" width="1.3" height="1.2" fill="#5bbcb3" opacity="0.55"/>
<rect x="655.98" y="603.3" width="1.3" height="1.2" fill="#fde74c" opacity="0.55"/>
<rect x="657.98" y="603.3" width="1.3" height="1.2" fill="#4db3e0" opacity="0.55"/>
<rect x="665.13" y="592.9" width="1.2" height="11.6" fill="#fde85a"/>
<rect x="660.23" y="603.3" width="1.3" height="1.2" fill="#b65fc4" opacity="0.55"/>
<rect x="662.23" y="603.3" width="1.3" height="1.2" fill="#3a4fc8" opacity="0.55"/>
<rect x="663.93" y="603.3" width="1.3" height="1.2" fill="#5bbcb3" opacity="0.55"/>
<rect x="667.23" y="603.3" width="1.3" height="1.2" fill="#fde74c" opacity="0.55"/>
<rect x="669.23" y="603.3" width="1.3" height="1.2" fill="#4db3e0" opacity="0.55"/>
<rect x="671.23" y="603.3" width="1.3" height="1.2" fill="#fde74c" opacity="0.55"/>
<rect x="678.38" y="595.0" width="1.2" height="9.5" fill="#fde85a"/>
<rect x="673.49" y="603.3" width="1.3" height="1.2" fill="#3a4fc8" opacity="0.55"/>
<rect x="675.49" y="603.3" width="1.3" height="1.2" fill="#5bbcb3" opacity="0.55"/>
<rect x="677.19" y="603.3" width="1.3" height="1.2" fill="#fde74c" opacity="0.55"/>
<rect x="680.49" y="603.3" width="1.3" height="1.2" fill="#4db3e0" opacity="0.55"/>
<rect x="682.49" y="603.3" width="1.3" height="1.2" fill="#fde74c" opacity="0.55"/>
<rect x="684.49" y="603.3" width="1.3" height="1.2" fill="#b65fc4" opacity="0.55"/>
<rect x="675.99" y="599.5" width="1.2" height="5" fill="#7cc7e6"/>
<rect x="691.64" y="380.0" width="1.2" height="224.5" fill="#fde85a"/>
<rect x="686.74" y="603.3" width="1.3" height="1.2" fill="#5bbcb3" opacity="0.55"/>
<rect x="688.74" y="603.3" width="1.3" height="1.2" fill="#fde74c" opacity="0.55"/>
<rect x="690.44" y="603.3" width="1.3" height="1.2" fill="#4db3e0" opacity="0.55"/>
<rect x="693.74" y="603.3" width="1.3" height="1.2" fill="#fde74c" opacity="0.55"/>
<rect x="695.74" y="603.3" width="1.3" height="1.2" fill="#b65fc4" opacity="0.55"/>
<rect x="697.74" y="603.3" width="1.3" height="1.2" fill="#3a4fc8" opacity="0.55"/>
<rect x="704.89" y="590.9" width="1.2" height="13.6" fill="#fde85a"/>
<rect x="699.99" y="603.3" width="1.3" height="1.2" fill="#fde74c" opacity="0.55"/>
<rect x="701.99" y="603.3" width="1.3" height="1.2" fill="#4db3e0" opacity="0.55"/>
<rect x="703.69" y="603.3" width="1.3" height="1.2" fill="#fde74c" opacity="0.55"/>
<rect x="706.99" y="603.3" width="1.3" height="1.2" fill="#b65fc4" opacity="0.55"/>
<rect x="708.99" y="603.3" width="1.3" height="1.2" fill="#3a4fc8" opacity="0.55"/>
<rect x="710.99" y="603.3" width="1.3" height="1.2" fill="#5bbcb3" opacity="0.55"/>
<rect x="718.14" y="579.1" width="1.2" height="25.4" fill="#fde85a"/>
<rect x="713.24" y="603.3" width="1.3" height="1.2" fill="#4db3e0" opacity="0.55"/>
<rect x="715.24" y="603.3" width="1.3" height="1.2" fill="#fde74c" opacity="0.55"/>
<rect x="716.94" y="603.3" width="1.3" height="1.2" fill="#b65fc4" opacity="0.55"/>
<rect x="720.24" y="603.3" width="1.3" height="1.2" fill="#3a4fc8" opacity="0.55"/>
<rect x="722.24" y="603.3" width="1.3" height="1.2" fill="#5bbcb3" opacity="0.55"/>
<rect x="724.24" y="603.3" width="1.3" height="1.2" fill="#fde74c" opacity="0.55"/>
<rect x="731.40" y="589.9" width="1.2" height="14.6" fill="#fde85a"/>
<rect x="726.50" y="603.3" width="1.3" height="1.2" fill="#fde74c" opacity="0.55"/>
<rect x="728.50" y="603.3" width="1.3" height="1.2" fill="#b65fc4" opacity="0.55"/>
<rect x="730.20" y="603.3" width="1.3" height="1.2" fill="#3a4fc8" opacity="0.55"/>
<rect x="733.50" y="603.3" width="1.3" height="1.2" fill="#5bbcb3" opacity="0.55"/>
<rect x="735.50" y="603.3" width="1.3" height="1.2" fill="#fde74c" opacity="0.55"/>
<rect x="737.50" y="603.3" width="1.3" height="1.2" fill="#4db3e0" opacity="0.55"/>
<rect x="729.00" y="599.5" width="1.2" height="5" fill="#7cc7e6"/>
<rect x="744.65" y="574.0" width="1.2" height="30.5" fill="#fde85a"/>
<rect x="739.75" y="603.3" width="1.3" height="1.2" fill="#b65fc4" opacity="0.55"/>
<rect x="741.75" y="603.3" width="1.3" height="1.2" fill="#3a4fc8" opacity="0.55"/>
<rect x="743.45" y="603.3" width="1.3" height="1.2" fill="#5bbcb3" opacity="0.55"/>
<rect x="746.75" y="603.3" width="1.3" height="1.2" fill="#fde74c" opacity="0.55"/>
<rect x="748.75" y="603.3" width="1.3" height="1.2" fill="#4db3e0" opacity="0.55"/>
<rect x="750.75" y="603.3" width="1.3" height="1.2" fill="#fde74c" opacity="0.55"/>
<rect x="757.90" y="586.1" width="1.2" height="18.4" fill="#fde85a"/>
<rect x="753.00" y="603.3" width="1.3" height="1.2" fill="#3a4fc8" opacity="0.55"/>
<rect x="755.00" y="603.3" width="1.3" height="1.2" fill="#5bbcb3" opacity="0.55"/>
<rect x="756.70" y="603.3" width="1.3" height="1.2" fill="#fde74c" opacity="0.55"/>
<rect x="760.00" y="603.3" width="1.3" height="1.2" fill="#4db3e0" opacity="0.55"/>
<rect x="762.00" y="603.3" width="1.3" height="1.2" fill="#fde74c" opacity="0.55"/>
<rect x="764.00" y="603.3" width="1.3" height="1.2" fill="#b65fc4" opacity="0.55"/>
<rect x="771.16" y="583.8" width="1.2" height="20.7" fill="#fde85a"/>
<rect x="766.26" y="603.3" width="1.3" height="1.2" fill="#5bbcb3" opacity="0.55"/>
<rect x="768.26" y="603.3" width="1.3" height="1.2" fill="#fde74c" opacity="0.55"/>
<rect x="769.96" y="603.3" width="1.3" height="1.2" fill="#4db3e0" opacity="0.55"/>
<rect x="773.26" y="603.3" width="1.3" height="1.2" fill="#fde74c" opacity="0.55"/>
<rect x="775.26" y="603.3" width="1.3" height="1.2" fill="#b65fc4" opacity="0.55"/>
<rect x="777.26" y="603.3" width="1.3" height="1.2" fill="#3a4fc8" opacity="0.55"/>
<rect x="784.41" y="589.2" width="1.2" height="15.3" fill="#fde85a"/>
<rect x="779.51" y="603.3" width="1.3" height="1.2" fill="#fde74c" opacity="0.55"/>
<rect x="781.51" y="603.3" width="1.3" height="1.2" fill="#4db3e0" opacity="0.55"/>
<rect x="783.21" y="603.3" width="1.3" height="1.2" fill="#fde74c" opacity="0.55"/>
<rect x="786.51" y="603.3" width="1.3" height="1.2" fill="#b65fc4" opacity="0.55"/>
<rect x="788.51" y="603.3" width="1.3" height="1.2" fill="#3a4fc8" opacity="0.55"/>
<rect x="790.51" y="603.3" width="1.3" height="1.2" fill="#5bbcb3" opacity="0.55"/>
<rect x="782.01" y="599.5" width="1.2" height="5" fill="#7cc7e6"/>
<rect x="797.66" y="577.1" width="1.2" height="27.4" fill="#fde85a"/>
<rect x="792.76" y="603.3" width="1.3" height="1.2" fill="#4db3e0" opacity="0.55"/>
<rect x="794.76" y="603.3" width="1.3" height="1.2" fill="#fde74c" opacity="0.55"/>
<rect x="796.46" y="603.3" width="1.3" height="1.2" fill="#b65fc4" opacity="0.55"/>
<rect x="799.76" y="603.3" width="1.3" height="1.2" fill="#3a4fc8" opacity="0.55"/>
<rect x="801.76" y="603.3" width="1.3" height="1.2" fill="#5bbcb3" opacity="0.55"/>
<rect x="803.76" y="603.3" width="1.3" height="1.2" fill="#fde74c" opacity="0.55"/>
<rect x="810.91" y="581.1" width="1.2" height="23.4" fill="#fde85a"/>
<rect x="806.01" y="603.3" width="1.3" height="1.2" fill="#fde74c" opacity="0.55"/>
<rect x="808.01" y="603.3" width="1.3" height="1.2" fill="#b65fc4" opacity="0.55"/>
<rect x="809.72" y="603.3" width="1.3" height="1.2" fill="#3a4fc8" opacity="0.55"/>
<rect x="813.01" y="603.3" width="1.3" height="1.2" fill="#5bbcb3" opacity="0.55"/>
<rect x="815.01" y="603.3" width="1.3" height="1.2" fill="#fde74c" opacity="0.55"/>
<rect x="817.01" y="603.3" width="1.3" height="1.2" fill="#4db3e0" opacity="0.55"/>
<rect x="824.17" y="589.2" width="1.2" height="15.3" fill="#fde85a"/>
<rect x="819.27" y="603.3" width="1.3" height="1.2" fill="#b65fc4" opacity="0.55"/>
<rect x="821.27" y="603.3" width="1.3" height="1.2" fill="#3a4fc8" opacity="0.55"/>
<rect x="822.97" y="603.3" width="1.3" height="1.2" fill="#5bbcb3" opacity="0.55"/>
<rect x="826.27" y="603.3" width="1.3" height="1.2" fill="#fde74c" opacity="0.55"/>
<rect x="828.27" y="603.3" width="1.3" height="1.2" fill="#4db3e0" opacity="0.55"/>
<rect x="830.27" y="603.3" width="1.3" height="1.2" fill="#fde74c" opacity="0.55"/>
<rect x="837.42" y="584.1" width="1.2" height="20.4" fill="#fde85a"/>
<rect x="832.52" y="603.3" width="1.3" height="1.2" fill="#3a4fc8" opacity="0.55"/>
<rect x="834.52" y="603.3" width="1.3" height="1.2" fill="#5bbcb3" opacity="0.55"/>
<rect x="836.22" y="603.3" width="1.3" height="1.2" fill="#fde74c" opacity="0.55"/>
<rect x="839.52" y="603.3" width="1.3" height="1.2" fill="#4db3e0" opacity="0.55"/>
<rect x="841.52" y="603.3" width="1.3" height="1.2" fill="#fde74c" opacity="0.55"/>
<rect x="843.52" y="603.3" width="1.3" height="1.2" fill="#b65fc4" opacity="0.55"/>
<rect x="835.02" y="599.5" width="1.2" height="5" fill="#7cc7e6"/>
<rect x="850.67" y="566.3" width="1.2" height="38.2" fill="#fde85a"/>
<rect x="845.77" y="603.3" width="1.3" height="1.2" fill="#5bbcb3" opacity="0.55"/>
<rect x="847.77" y="603.3" width="1.3" height="1.2" fill="#fde74c" opacity="0.55"/>
<rect x="849.47" y="603.3" width="1.3" height="1.2" fill="#4db3e0" opacity="0.55"/>
<rect x="852.77" y="603.3" width="1.3" height="1.2" fill="#fde74c" opacity="0.55"/>
<rect x="854.77" y="603.3" width="1.3" height="1.2" fill="#b65fc4" opacity="0.55"/>
<rect x="856.77" y="603.3" width="1.3" height="1.2" fill="#3a4fc8" opacity="0.55"/>
<rect x="863.93" y="589.2" width="1.2" height="15.3" fill="#fde85a"/>
<rect x="859.03" y="603.3" width="1.3" height="1.2" fill="#fde74c" opacity="0.55"/>
<rect x="861.03" y="603.3" width="1.3" height="1.2" fill="#4db3e0" opacity="0.55"/>
<rect x="862.73" y="603.3" width="1.3" height="1.2" fill="#fde74c" opacity="0.55"/>
<rect x="866.03" y="603.3" width="1.3" height="1.2" fill="#b65fc4" opacity="0.55"/>
<rect x="868.03" y="603.3" width="1.3" height="1.2" fill="#3a4fc8" opacity="0.55"/>
<rect x="870.03" y="603.3" width="1.3" height="1.2" fill="#5bbcb3" opacity="0.55"/>
<rect x="877.18" y="579.4" width="1.2" height="25.1" fill="#fde85a"/>
<rect x="872.28" y="603.3" width="1.3" height="1.2" fill="#4db3e0" opacity="0.55"/>
<rect x="874.28" y="603.3" width="1.3" height="1.2" fill="#fde74c" opacity="0.55"/>
<rect x="875.98" y="603.3" width="1.3" height="1.2" fill="#b65fc4" opacity="0.55"/>
<rect x="879.28" y="603.3" width="1.3" height="1.2" fill="#3a4fc8" opacity="0.55"/>
<rect x="881.28" y="603.3" width="1.3" height="1.2" fill="#5bbcb3" opacity="0.55"/>
<rect x="883.28" y="603.3" width="1.3" height="1.2" fill="#fde74c" opacity="0.55"/>
<rect x="890.43" y="588.2" width="1.2" height="16.3" fill="#fde85a"/>
<rect x="885.53" y="603.3" width="1.3" height="1.2" fill="#fde74c" opacity="0.55"/>
<rect x="887.53" y="603.3" width="1.3" height="1.2" fill="#b65fc4" opacity="0.55"/>
<rect x="889.23" y="603.3" width="1.3" height="1.2" fill="#3a4fc8" opacity="0.55"/>
<rect x="892.53" y="603.3" width="1.3" height="1.2" fill="#5bbcb3" opacity="0.55"/>
<rect x="894.53" y="603.3" width="1.3" height="1.2" fill="#fde74c" opacity="0.55"/>
<rect x="896.53" y="603.3" width="1.3" height="1.2" fill="#4db3e0" opacity="0.55"/>
<rect x="888.03" y="599.5" width="1.2" height="5" fill="#7cc7e6"/>
<rect x="903.69" y="583.1" width="1.2" height="21.4" fill="#fde85a"/>
<rect x="898.79" y="603.3" width="1.3" height="1.2" fill="#b65fc4" opacity="0.55"/>
<rect x="900.79" y="603.3" width="1.3" height="1.2" fill="#3a4fc8" opacity="0.55"/>
<rect x="902.49" y="603.3" width="1.3" height="1.2" fill="#5bbcb3" opacity="0.55"/>
<rect x="905.79" y="603.3" width="1.3" height="1.2" fill="#fde74c" opacity="0.55"/>
<rect x="907.79" y="603.3" width="1.3" height="1.2" fill="#4db3e0" opacity="0.55"/>
<rect x="909.79" y="603.3" width="1.3" height="1.2" fill="#fde74c" opacity="0.55"/>
<rect x="916.94" y="593.2" width="1.2" height="11.3" fill="#fde85a"/>
<rect x="912.04" y="603.3" width="1.3" height="1.2" fill="#3a4fc8" opacity="0.55"/>
<rect x="914.04" y="603.3" width="1.3" height="1.2" fill="#5bbcb3" opacity="0.55"/>
<rect x="915.74" y="603.3" width="1.3" height="1.2" fill="#fde74c" opacity="0.55"/>
<rect x="919.04" y="603.3" width="1.3" height="1.2" fill="#4db3e0" opacity="0.55"/>
<rect x="921.04" y="603.3" width="1.3" height="1.2" fill="#fde74c" opacity="0.55"/>
<rect x="923.04" y="603.3" width="1.3" height="1.2" fill="#b65fc4" opacity="0.55"/>
<rect x="930.19" y="583.1" width="1.2" height="21.4" fill="#fde85a"/>
<rect x="925.29" y="603.3" width="1.3" height="1.2" fill="#5bbcb3" opacity="0.55"/>
<rect x="927.29" y="603.3" width="1.3" height="1.2" fill="#fde74c" opacity="0.55"/>
<rect x="928.99" y="603.3" width="1.3" height="1.2" fill="#4db3e0" opacity="0.55"/>
<rect x="932.29" y="603.3" width="1.3" height="1.2" fill="#fde74c" opacity="0.55"/>
<rect x="934.29" y="603.3" width="1.3" height="1.2" fill="#b65fc4" opacity="0.55"/>
<rect x="936.29" y="603.3" width="1.3" height="1.2" fill="#3a4fc8" opacity="0.55"/>
<rect x="943.45" y="589.2" width="1.2" height="15.3" fill="#fde85a"/>
<rect x="938.55" y="603.3" width="1.3" height="1.2" fill="#fde74c" opacity="0.55"/>
<rect x="940.55" y="603.3" width="1.3" height="1.2" fill="#4db3e0" opacity="0.55"/>
<rect x="942.25" y="603.3" width="1.3" height="1.2" fill="#fde74c" opacity="0.55"/>
<rect x="945.55" y="603.3" width="1.3" height="1.2" fill="#b65fc4" opacity="0.55"/>
<rect x="947.55" y="603.3" width="1.3" height="1.2" fill="#3a4fc8" opacity="0.55"/>
<rect x="949.55" y="603.3" width="1.3" height="1.2" fill="#5bbcb3" opacity="0.55"/>
<rect x="941.05" y="599.5" width="1.2" height="5" fill="#7cc7e6"/>
<rect x="956.70" y="557.2" width="1.2" height="47.3" fill="#fde85a"/>
<rect x="951.80" y="603.3" width="1.3" height="1.2" fill="#4db3e0" opacity="0.55"/>
<rect x="953.80" y="603.3" width="1.3" height="1.2" fill="#fde74c" opacity="0.55"/>
<rect x="955.50" y="603.3" width="1.3" height="1.2" fill="#b65fc4" opacity="0.55"/>
<rect x="958.80" y="603.3" width="1.3" height="1.2" fill="#3a4fc8" opacity="0.55"/>
<rect x="960.80" y="603.3" width="1.3" height="1.2" fill="#5bbcb3" opacity="0.55"/>
<rect x="962.80" y="603.3" width="1.3" height="1.2" fill="#fde74c" opacity="0.55"/>
<rect x="969.95" y="592.1" width="1.2" height="12.4" fill="#fde85a"/>
<rect x="965.05" y="603.3" width="1.3" height="1.2" fill="#fde74c" opacity="0.55"/>
<rect x="967.05" y="603.3" width="1.3" height="1.2" fill="#b65fc4" opacity="0.55"/>
<rect x="968.75" y="603.3" width="1.3" height="1.2" fill="#3a4fc8" opacity="0.55"/>
<rect x="972.05" y="603.3" width="1.3" height="1.2" fill="#5bbcb3" opacity="0.55"/>
<rect x="974.05" y="603.3" width="1.3" height="1.2" fill="#fde74c" opacity="0.55"/>
<rect x="976.05" y="603.3" width="1.3" height="1.2" fill="#4db3e0" opacity="0.55"/>
<rect x="983.20" y="593.9" width="1.2" height="10.6" fill="#fde85a"/>
<rect x="978.30" y="603.3" width="1.3" height="1.2" fill="#b65fc4" opacity="0.55"/>
<rect x="980.30" y="603.3" width="1.3" height="1.2" fill="#3a4fc8" opacity="0.55"/>
<rect x="982.00" y="603.3" width="1.3" height="1.2" fill="#5bbcb3" opacity="0.55"/>
<rect x="985.30" y="603.3" width="1.3" height="1.2" fill="#fde74c" opacity="0.55"/>
<rect x="987.30" y="603.3" width="1.3" height="1.2" fill="#4db3e0" opacity="0.55"/>
<rect x="989.30" y="603.3" width="1.3" height="1.2" fill="#fde74c" opacity="0.55"/>
<rect x="996.46" y="593.9" width="1.2" height="10.6" fill="#fde85a"/>
<rect x="991.56" y="603.3" width="1.3" height="1.2" fill="#3a4fc8" opacity="0.55"/>
<rect x="993.56" y="603.3" width="1.3" height="1.2" fill="#5bbcb3" opacity="0.55"/>
<rect x="995.26" y="603.3" width="1.3" height="1.2" fill="#fde74c" opacity="0.55"/>
<rect x="998.56" y="603.3" width="1.3" height="1.2" fill="#4db3e0" opacity="0.55"/>
<rect x="1000.56" y="603.3" width="1.3" height="1.2" fill="#fde74c" opacity="0.55"/>
<rect x="1002.56" y="603.3" width="1.3" height="1.2" fill="#b65fc4" opacity="0.55"/>
<rect x="994.06" y="599.5" width="1.2" height="5" fill="#7cc7e6"/>
<rect x="1009.71" y="582.5" width="1.2" height="22.0" fill="#fde85a"/>
<rect x="1004.81" y="603.3" width="1.3" height="1.2" fill="#5bbcb3" opacity="0.55"/>
<rect x="1006.81" y="603.3" width="1.3" height="1.2" fill="#fde74c" opacity="0.55"/>
<rect x="1008.51" y="603.3" width="1.3" height="1.2" fill="#4db3e0" opacity="0.55"/>
<rect x="1011.81" y="603.3" width="1.3" height="1.2" fill="#fde74c" opacity="0.55"/>
<rect x="1013.81" y="603.3" width="1.3" height="1.2" fill="#b65fc4" opacity="0.55"/>
<rect x="1015.81" y="603.3" width="1.3" height="1.2" fill="#3a4fc8" opacity="0.55"/>
<rect x="1022.96" y="591.9" width="1.2" height="12.6" fill="#fde85a"/>
<rect x="1018.06" y="603.3" width="1.3" height="1.2" fill="#fde74c" opacity="0.55"/>
<rect x="1020.06" y="603.3" width="1.3" height="1.2" fill="#4db3e0" opacity="0.55"/>
<rect x="1021.76" y="603.3" width="1.3" height="1.2" fill="#fde74c" opacity="0.55"/>
<rect x="1025.06" y="603.3" width="1.3" height="1.2" fill="#b65fc4" opacity="0.55"/>
<rect x="1027.06" y="603.3" width="1.3" height="1.2" fill="#3a4fc8" opacity="0.55"/>
<rect x="1029.06" y="603.3" width="1.3" height="1.2" fill="#5bbcb3" opacity="0.55"/>
<rect x="1036.22" y="576.8" width="1.2" height="27.7" fill="#fde85a"/>
<rect x="1031.32" y="603.3" width="1.3" height="1.2" fill="#4db3e0" opacity="0.55"/>
<rect x="1033.32" y="603.3" width="1.3" height="1.2" fill="#fde74c" opacity="0.55"/>
<rect x="1035.02" y="603.3" width="1.3" height="1.2" fill="#b65fc4" opacity="0.55"/>
<rect x="1038.32" y="603.3" width="1.3" height="1.2" fill="#3a4fc8" opacity="0.55"/>
<rect x="1040.32" y="603.3" width="1.3" height="1.2" fill="#5bbcb3" opacity="0.55"/>
<rect x="1042.32" y="603.3" width="1.3" height="1.2" fill="#fde74c" opacity="0.55"/>
<rect x="1049.47" y="591.9" width="1.2" height="12.6" fill="#fde85a"/>
<rect x="1044.57" y="603.3" width="1.3" height="1.2" fill="#fde74c" opacity="0.55"/>
<rect x="1046.57" y="603.3" width="1.3" height="1.2" fill="#b65fc4" opacity="0.55"/>
<rect x="1048.27" y="603.3" width="1.3" height="1.2" fill="#3a4fc8" opacity="0.55"/>
<rect x="1051.57" y="603.3" width="1.3" height="1.2" fill="#5bbcb3" opacity="0.55"/>
<rect x="1053.57" y="603.3" width="1.3" height="1.2" fill="#fde74c" opacity="0.55"/>
<rect x="1055.57" y="603.3" width="1.3" height="1.2" fill="#4db3e0" opacity="0.55"/>
<rect x="1047.07" y="599.5" width="1.2" height="5" fill="#7cc7e6"/>
<rect x="1062.72" y="593.9" width="1.2" height="10.6" fill="#fde85a"/>
<rect x="1057.82" y="603.3" width="1.3" height="1.2" fill="#b65fc4" opacity="0.55"/>
<rect x="1059.82" y="603.3" width="1.3" height="1.2" fill="#3a4fc8" opacity="0.55"/>
<rect x="1061.52" y="603.3" width="1.3" height="1.2" fill="#5bbcb3" opacity="0.55"/>
<rect x="1064.82" y="603.3" width="1.3" height="1.2" fill="#fde74c" opacity="0.55"/>
<rect x="1066.82" y="603.3" width="1.3" height="1.2" fill="#4db3e0" opacity="0.55"/>
<rect x="1068.82" y="603.3" width="1.3" height="1.2" fill="#fde74c" opacity="0.55"/>
<rect x="1075.98" y="593.9" width="1.2" height="10.6" fill="#fde85a"/>
<rect x="1071.08" y="603.3" width="1.3" height="1.2" fill="#3a4fc8" opacity="0.55"/>
<rect x="1073.08" y="603.3" width="1.3" height="1.2" fill="#5bbcb3" opacity="0.55"/>
<rect x="1074.78" y="603.3" width="1.3" height="1.2" fill="#fde74c" opacity="0.55"/>
<rect x="1078.08" y="603.3" width="1.3" height="1.2" fill="#4db3e0" opacity="0.55"/>
<rect x="1080.08" y="603.3" width="1.3" height="1.2" fill="#fde74c" opacity="0.55"/>
<rect x="1082.08" y="603.3" width="1.3" height="1.2" fill="#b65fc4" opacity="0.55"/>
<rect x="1089.23" y="585.2" width="1.2" height="19.3" fill="#fde85a"/>
<rect x="1084.33" y="603.3" width="1.3" height="1.2" fill="#5bbcb3" opacity="0.55"/>
<rect x="1086.33" y="603.3" width="1.3" height="1.2" fill="#fde74c" opacity="0.55"/>
<rect x="1088.03" y="603.3" width="1.3" height="1.2" fill="#4db3e0" opacity="0.55"/>
<rect x="1091.33" y="603.3" width="1.3" height="1.2" fill="#fde74c" opacity="0.55"/>
<rect x="1093.33" y="603.3" width="1.3" height="1.2" fill="#b65fc4" opacity="0.55"/>
<rect x="1095.33" y="603.3" width="1.3" height="1.2" fill="#3a4fc8" opacity="0.55"/>
<rect x="1102.48" y="467.2" width="1.2" height="137.3" fill="#fde85a"/>
<rect x="1097.58" y="603.3" width="1.3" height="1.2" fill="#fde74c" opacity="0.55"/>
<rect x="1099.58" y="603.3" width="1.3" height="1.2" fill="#4db3e0" opacity="0.55"/>
<rect x="1101.28" y="603.3" width="1.3" height="1.2" fill="#fde74c" opacity="0.55"/>
<rect x="1104.58" y="603.3" width="1.3" height="1.2" fill="#b65fc4" opacity="0.55"/>
<rect x="1106.58" y="603.3" width="1.3" height="1.2" fill="#3a4fc8" opacity="0.55"/>
<rect x="1108.58" y="603.3" width="1.3" height="1.2" fill="#5bbcb3" opacity="0.55"/>
<rect x="1100.08" y="599.5" width="1.2" height="5" fill="#7cc7e6"/>
<rect x="1115.73" y="440.0" width="1.2" height="164.5" fill="#fde85a"/>
<rect x="1110.83" y="603.3" width="1.3" height="1.2" fill="#4db3e0" opacity="0.55"/>
<rect x="1112.83" y="603.3" width="1.3" height="1.2" fill="#fde74c" opacity="0.55"/>
<rect x="1114.53" y="603.3" width="1.3" height="1.2" fill="#b65fc4" opacity="0.55"/>
<rect x="1117.83" y="603.3" width="1.3" height="1.2" fill="#3a4fc8" opacity="0.55"/>
<rect x="1119.83" y="603.3" width="1.3" height="1.2" fill="#5bbcb3" opacity="0.55"/>
<rect x="1121.83" y="603.3" width="1.3" height="1.2" fill="#fde74c" opacity="0.55"/>
<rect x="1128.99" y="585.2" width="1.2" height="19.3" fill="#fde85a"/>
<rect x="1124.09" y="603.3" width="1.3" height="1.2" fill="#fde74c" opacity="0.55"/>
<rect x="1126.09" y="603.3" width="1.3" height="1.2" fill="#b65fc4" opacity="0.55"/>
<rect x="1127.79" y="603.3" width="1.3" height="1.2" fill="#3a4fc8" opacity="0.55"/>
<rect x="1131.09" y="603.3" width="1.3" height="1.2" fill="#5bbcb3" opacity="0.55"/>
<rect x="1133.09" y="603.3" width="1.3" height="1.2" fill="#fde74c" opacity="0.55"/>
<rect x="1135.09" y="603.3" width="1.3" height="1.2" fill="#4db3e0" opacity="0.55"/>
<rect x="1142.24" y="576.0" width="1.2" height="28.5" fill="#fde85a"/>
<rect x="1137.34" y="603.3" width="1.3" height="1.2" fill="#b65fc4" opacity="0.55"/>
<rect x="1139.34" y="603.3" width="1.3" height="1.2" fill="#3a4fc8" opacity="0.55"/>
<rect x="1141.04" y="603.3" width="1.3" height="1.2" fill="#5bbcb3" opacity="0.55"/>
<rect x="1144.34" y="603.3" width="1.3" height="1.2" fill="#fde74c" opacity="0.55"/>
<rect x="1146.34" y="603.3" width="1.3" height="1.2" fill="#4db3e0" opacity="0.55"/>
<rect x="1148.34" y="603.3" width="1.3" height="1.2" fill="#fde74c" opacity="0.55"/>
<rect x="1155.49" y="585.2" width="1.2" height="19.3" fill="#fde85a"/>
<rect x="1150.59" y="603.3" width="1.3" height="1.2" fill="#3a4fc8" opacity="0.55"/>
<rect x="1152.59" y="603.3" width="1.3" height="1.2" fill="#5bbcb3" opacity="0.55"/>
<rect x="1154.29" y="603.3" width="1.3" height="1.2" fill="#fde74c" opacity="0.55"/>
<rect x="1157.59" y="603.3" width="1.3" height="1.2" fill="#4db3e0" opacity="0.55"/>
<rect x="1159.59" y="603.3" width="1.3" height="1.2" fill="#fde74c" opacity="0.55"/>
<rect x="1161.59" y="603.3" width="1.3" height="1.2" fill="#b65fc4" opacity="0.55"/>
<rect x="1153.09" y="599.5" width="1.2" height="5" fill="#7cc7e6"/>
<rect x="1168.75" y="585.2" width="1.2" height="19.3" fill="#fde85a"/>
<rect x="1163.85" y="603.3" width="1.3" height="1.2" fill="#5bbcb3" opacity="0.55"/>
<rect x="1165.85" y="603.3" width="1.3" height="1.2" fill="#fde74c" opacity="0.55"/>
<rect x="1167.55" y="603.3" width="1.3" height="1.2" fill="#4db3e0" opacity="0.55"/>
<rect x="1170.85" y="603.3" width="1.3" height="1.2" fill="#fde74c" opacity="0.55"/>
<rect x="1172.85" y="603.3" width="1.3" height="1.2" fill="#b65fc4" opacity="0.55"/>
<rect x="1174.85" y="603.3" width="1.3" height="1.2" fill="#3a4fc8" opacity="0.55"/>
<rect x="1182.00" y="589.0" width="1.2" height="15.5" fill="#fde85a"/>
<rect x="1177.10" y="603.3" width="1.3" height="1.2" fill="#fde74c" opacity="0.55"/>
<rect x="1179.10" y="603.3" width="1.3" height="1.2" fill="#4db3e0" opacity="0.55"/>
<rect x="1180.80" y="603.3" width="1.3" height="1.2" fill="#fde74c" opacity="0.55"/>
<rect x="1184.10" y="603.3" width="1.3" height="1.2" fill="#b65fc4" opacity="0.55"/>
<rect x="1186.10" y="603.3" width="1.3" height="1.2" fill="#3a4fc8" opacity="0.55"/>
<rect x="1188.10" y="603.3" width="1.3" height="1.2" fill="#5bbcb3" opacity="0.55"/>
<rect x="1195.25" y="578.2" width="1.2" height="26.3" fill="#fde85a"/>
<rect x="1190.35" y="603.3" width="1.3" height="1.2" fill="#4db3e0" opacity="0.55"/>
<rect x="1192.35" y="603.3" width="1.3" height="1.2" fill="#fde74c" opacity="0.55"/>
<rect x="1194.05" y="603.3" width="1.3" height="1.2" fill="#b65fc4" opacity="0.55"/>
<rect x="1197.35" y="603.3" width="1.3" height="1.2" fill="#3a4fc8" opacity="0.55"/>
<rect x="1199.35" y="603.3" width="1.3" height="1.2" fill="#5bbcb3" opacity="0.55"/>
<rect x="1201.35" y="603.3" width="1.3" height="1.2" fill="#fde74c" opacity="0.55"/>
<rect x="1208.51" y="582.4" width="1.2" height="22.1" fill="#fde85a"/>
<rect x="1203.61" y="603.3" width="1.3" height="1.2" fill="#fde74c" opacity="0.55"/>
<rect x="1205.61" y="603.3" width="1.3" height="1.2" fill="#b65fc4" opacity="0.55"/>
<rect x="1207.31" y="603.3" width="1.3" height="1.2" fill="#3a4fc8" opacity="0.55"/>
<rect x="1210.61" y="603.3" width="1.3" height="1.2" fill="#5bbcb3" opacity="0.55"/>
<rect x="1212.61" y="603.3" width="1.3" height="1.2" fill="#fde74c" opacity="0.55"/>
<rect x="1214.61" y="603.3" width="1.3" height="1.2" fill="#4db3e0" opacity="0.55"/>
<rect x="1206.11" y="599.5" width="1.2" height="5" fill="#7cc7e6"/>
<rect x="1221.76" y="592.0" width="1.2" height="12.5" fill="#fde85a"/>
<rect x="1216.86" y="603.3" width="1.3" height="1.2" fill="#b65fc4" opacity="0.55"/>
<rect x="1218.86" y="603.3" width="1.3" height="1.2" fill="#3a4fc8" opacity="0.55"/>
<rect x="1220.56" y="603.3" width="1.3" height="1.2" fill="#5bbcb3" opacity="0.55"/>
<rect x="1223.86" y="603.3" width="1.3" height="1.2" fill="#fde74c" opacity="0.55"/>
<rect x="1225.86" y="603.3" width="1.3" height="1.2" fill="#4db3e0" opacity="0.55"/>
<rect x="1227.86" y="603.3" width="1.3" height="1.2" fill="#fde74c" opacity="0.55"/>
<rect x="1235.01" y="583.1" width="1.2" height="21.4" fill="#fde85a"/>
<rect x="1230.11" y="603.3" width="1.3" height="1.2" fill="#3a4fc8" opacity="0.55"/>
<rect x="1232.11" y="603.3" width="1.3" height="1.2" fill="#5bbcb3" opacity="0.55"/>
<rect x="1233.81" y="603.3" width="1.3" height="1.2" fill="#fde74c" opacity="0.55"/>
<rect x="1237.11" y="603.3" width="1.3" height="1.2" fill="#4db3e0" opacity="0.55"/>
<rect x="1239.11" y="603.3" width="1.3" height="1.2" fill="#fde74c" opacity="0.55"/>
<rect x="1241.11" y="603.3" width="1.3" height="1.2" fill="#b65fc4" opacity="0.55"/>
<rect x="1248.26" y="568.1" width="1.2" height="36.4" fill="#fde85a"/>
<rect x="1243.36" y="603.3" width="1.3" height="1.2" fill="#5bbcb3" opacity="0.55"/>
<rect x="1245.36" y="603.3" width="1.3" height="1.2" fill="#fde74c" opacity="0.55"/>
<rect x="1247.06" y="603.3" width="1.3" height="1.2" fill="#4db3e0" opacity="0.55"/>
<rect x="1250.36" y="603.3" width="1.3" height="1.2" fill="#fde74c" opacity="0.55"/>
<rect x="1252.36" y="603.3" width="1.3" height="1.2" fill="#b65fc4" opacity="0.55"/>
<rect x="1254.36" y="603.3" width="1.3" height="1.2" fill="#3a4fc8" opacity="0.55"/>
<rect x="1261.52" y="585.2" width="1.2" height="19.3" fill="#fde85a"/>
<rect x="1256.62" y="603.3" width="1.3" height="1.2" fill="#fde74c" opacity="0.55"/>
<rect x="1258.62" y="603.3" width="1.3" height="1.2" fill="#4db3e0" opacity="0.55"/>
<rect x="1260.32" y="603.3" width="1.3" height="1.2" fill="#fde74c" opacity="0.55"/>
<rect x="1263.62" y="603.3" width="1.3" height="1.2" fill="#b65fc4" opacity="0.55"/>
<rect x="1265.62" y="603.3" width="1.3" height="1.2" fill="#3a4fc8" opacity="0.55"/>
<rect x="1267.62" y="603.3" width="1.3" height="1.2" fill="#5bbcb3" opacity="0.55"/>
<rect x="1259.12" y="599.5" width="1.2" height="5" fill="#7cc7e6"/>
<rect x="1274.77" y="602.1" width="1.2" height="2.4" fill="#fde85a"/>
<rect x="1269.87" y="603.3" width="1.3" height="1.2" fill="#4db3e0" opacity="0.55"/>
<rect x="1271.87" y="603.3" width="1.3" height="1.2" fill="#fde74c" opacity="0.55"/>
<rect x="1273.57" y="603.3" width="1.3" height="1.2" fill="#b65fc4" opacity="0.55"/>
<rect x="1276.87" y="603.3" width="1.3" height="1.2" fill="#3a4fc8" opacity="0.55"/>
<rect x="1278.87" y="603.3" width="1.3" height="1.2" fill="#5bbcb3" opacity="0.55"/>
<rect x="1280.87" y="603.3" width="1.3" height="1.2" fill="#fde74c" opacity="0.55"/>
<line x1="80" y1="605.5" x2="1297.5" y2="605.5" stroke="#dfe5ef" stroke-width="1"/>
<line x1="225.5" y1="605" x2="225.5" y2="610" stroke="#555" stroke-width="1"/>
<line x1="384.5" y1="605" x2="384.5" y2="610" stroke="#555" stroke-width="1"/>
<line x1="543.5" y1="605" x2="543.5" y2="610" stroke="#555" stroke-width="1"/>
<line x1="702.5" y1="605" x2="702.5" y2="610" stroke="#555" stroke-width="1"/>
<line x1="861.5" y1="605" x2="861.5" y2="610" stroke="#555" stroke-width="1"/>
<line x1="1020.5" y1="605" x2="1020.5" y2="610" stroke="#555" stroke-width="1"/>
<line x1="1179.5" y1="605" x2="1179.5" y2="610" stroke="#555" stroke-width="1"/>
</svg>
<div class="t" style="right:1268px;top:271.7px;font-size:12.2px;color:#6e7079;text-align:right">4000.00</div>
<div class="t" style="right:1268px;top:353.7px;font-size:12.2px;color:#6e7079;text-align:right">3000.00</div>
<div class="t" style="right:1268px;top:434.5px;font-size:12.2px;color:#6e7079;text-align:right">2000.00</div>
<div class="t" style="right:1268px;top:516.7px;font-size:12.2px;color:#6e7079;text-align:right">1000.00</div>
<div class="t" style="right:1268px;top:598.0px;font-size:12.2px;color:#6e7079;text-align:right">0.00</div>
<div class="t" style="left:185.3px;width:80px;text-align:center;top:611.7px;font-size:12.2px;color:#6e7079">12:38</div>
<div class="t" style="left:344.5px;width:80px;text-align:center;top:611.7px;font-size:12.2px;color:#6e7079">12:40</div>
<div class="t" style="left:503.5px;width:80px;text-align:center;top:611.7px;font-size:12.2px;color:#6e7079">12:42</div>
<div class="t" style="left:662.3px;width:80px;text-align:center;top:611.7px;font-size:12.2px;color:#6e7079">12:44</div>
<div class="t" style="left:821.4px;width:80px;text-align:center;top:611.7px;font-size:12.2px;color:#6e7079">12:46</div>
<div class="t" style="left:980.6px;width:80px;text-align:center;top:611.7px;font-size:12.2px;color:#6e7079">12:48</div>
<div class="t" style="left:1139.3px;width:80px;text-align:center;top:611.7px;font-size:12.2px;color:#6e7079">12:50</div>
<div class="t" style="left:628.7px;width:120px;text-align:center;top:628.5px;font-size:14.8px;color:#464646;font-weight:bold">Timestamp</div>
<div class="a" style="left:34px;top:650px;width:25px;height:14px;border-radius:3px;background-color:#5bbcb3"></div>
<div class="t" style="left:64.5px;top:651.2px;font-size:12.7px;color:#333">controller (Times...</div>
<div class="a" style="left:179px;top:650px;width:25px;height:14px;border-radius:3px;background-color:#fde74c"></div>
<div class="t" style="left:209.4px;top:651.2px;font-size:12.7px;color:#333">report-server-dev...</div>
<div class="a" style="left:328px;top:650px;width:25px;height:14px;border-radius:3px;background-color:#fde74c"></div>
<div class="t" style="left:358px;top:651.2px;font-size:12.7px;color:#333">unknown (Timesta...</div>
<div class="a" style="left:482.4px;top:650px;width:25px;height:14px;border-radius:3px;background-color:#b65fc4"></div>
<div class="t" style="left:512.3px;top:651.2px;font-size:12.7px;color:#333">openobserve (Tim...</div>
<div class="a" style="left:635px;top:650px;width:25px;height:14px;border-radius:3px;background-color:#3a4fc8;background-image:radial-gradient(circle,#8a7fe0 0.6px,transparent 0.9px);background-size:3px 3px"></div>
<div class="t" style="left:665px;top:651.2px;font-size:12.7px;color:#333">manager (Timesta...</div>
<div class="a" style="left:786.8px;top:650px;width:25px;height:14px;border-radius:3px;background-color:#4fb5e0"></div>
<div class="t" style="left:816.7px;top:651.2px;font-size:12.7px;color:#333">kube-proxy (Times...</div>
<div class="a" style="left:942px;top:650px;width:25px;height:14px;border-radius:3px;background-color:#5ec26a"></div>
<div class="t" style="left:972.5px;top:651.2px;font-size:12.7px;color:#333">check-nats (Times...</div>
<svg class="a" style="left:1244px;top:245px" width="16" height="16" viewBox="0 0 16 16"><circle cx="8" cy="8" r="6.3" fill="#dcdcdc" stroke="#5f5f5f" stroke-width="1.4"/><path d="M8 8V3.8" stroke="#b04fd0" stroke-width="1.2"/><path d="M8 8L10.5 6.2" stroke="#333" stroke-width="1.2"/></svg>
<div class="t" style="left:1262.8px;top:247.4px;font-size:13.7px;color:#2a2a2a">1m ago</div>
<!-- /CHART -->

<!-- QUERY -->
<div class="a" style="left:24px;top:675px;width:1293px;height:40px;background:#c8c6c9"></div>
<div class="t" style="left:36px;top:688.3px;font-size:13.8px;font-weight:bold;color:#1a1a1a">Query</div>
<div class="a" style="left:1116px;top:687px;width:27px;height:15px;border-radius:8px;background:#dcc5e2"></div>
<div class="a" style="left:1112.5px;top:687.5px;width:15px;height:15px;border-radius:50%;background:#fff;box-shadow:0 1px 2px rgba(0,0,0,.3)"></div>
<div class="t" style="left:1116.5px;top:690.5px;font-size:8.5px;font-style:italic;color:#888;font-family:'Liberation Serif',serif">fx</div>
<div class="a" style="left:1152px;top:680px;width:153px;height:29px;border:1px solid #6b6b6b;border-radius:7px;background:#f2edf2;overflow:hidden"><div class="a" style="left:0;top:0;width:52px;height:27px;background:#7e3d98"></div></div>
<div class="t" style="left:1163.6px;top:687.4px;font-size:13.6px;font-weight:bold;color:#fff">Auto</div>
<div class="t" style="left:1215.5px;top:687.4px;font-size:13.6px;color:#222">Custom SQL</div>
<div class="a" style="left:24px;top:715px;width:1293px;height:110px;background:#fafafa"></div>
<div class="a" style="left:1203.3px;top:715.5px;width:95.4px;height:18.5px;background:#e5ebf1;border-radius:3px 3px 0 0"></div>
<div class="a" style="left:34.7px;top:734px;width:648.6px;height:18.5px;background:#e5ebf1;border-radius:3px 0 3px 3px"></div>
<div class="t" style="left:25px;top:715.2px;font-family:'Liberation Mono',monospace;font-size:12.83px;line-height:19px;color:#237893">1</div>
<div class="code" style="left:35.7px;top:715.2px;font-size:12.83px"><span class="k">SELECT</span> histogram<span class="pr">(</span>_timestamp<span class="pr">)</span> <span class="k">as</span> "x_axis_1", <span class="f">count</span><span class="pr">(</span>_timestamp<span class="pr">)</span> <span class="k">as</span> "y_axis_1", <span class="f">SUM</span><span class="pr">(</span><span class="k">CASE</span> <span class="k">WHEN</span> <span class="f">COALESCE</span><span class="pr">(</span>severity, <span class="n">0</span><span class="pr">)</span> <span class="o">&gt;=</span> <span class="n">4</span> <span class="k">THEN</span> <span class="n">1</span> <span class="k">ELSE</span> <span class="n">0</span> <span class="k">END</span><span class="pr">)</span> <span class="k">as</span> "y_axis_2", <span class="f">ROUND</span><span class="pr">(</span><span class="n">100.0</span><span class="ws">·</span>
<span class="o">*</span><span class="ws">·</span><span class="f">SUM</span><span class="pr">(</span><span class="k">CASE</span><span class="ws">·</span><span class="k">WHEN</span><span class="ws">·</span><span class="f">COALESCE</span><span class="pr">(</span>severity,<span class="ws">·</span><span class="n">0</span><span class="pr">)</span><span class="ws">·</span><span class="o">&gt;=</span><span class="ws">·</span><span class="n">4</span><span class="ws">·</span><span class="k">THEN</span><span class="ws">·</span><span class="n">1</span><span class="ws">·</span><span class="k">ELSE</span><span class="ws">·</span><span class="n">0</span><span class="ws">·</span><span class="k">END</span><span class="pr">)</span><span class="o">/</span><span class="f">COUNT</span><span class="pr">(</span>_timestamp<span class="pr">)</span>,<span class="ws">·</span><span class="n">2</span><span class="pr">)</span><span class="ws">·</span><span class="k">as</span> "y_axis_3", <span class="f">coalesce</span><span class="pr">(</span>k8s_container_name, <span class="s">'unknown'</span><span class="pr">)</span> <span class="k">as</span> "breakdown_1" <span class="k">FROM</span>
"default"  <span class="k">GROUP</span> <span class="k">BY</span> x_axis_1, breakdown_1 <span class="k">ORDER</span> <span class="k">BY</span> x_axis_1 <span class="k">ASC</span></div>
<!-- /QUERY -->

<!-- POPUP -->
<div class="a" style="left:249px;top:112px;width:771px;height:298px;background:#fff;border-radius:5px;box-shadow:0 1px 5px rgba(0,0,0,.2),0 2px 2px rgba(0,0,0,.14),0 3px 1px -2px rgba(0,0,0,.12)"></div>
<div class="t" style="left:265px;top:128.6px;font-size:13.5px;color:#1a1a1a">Property</div>
<div class="t" style="left:265px;top:155px;font-size:13px;color:#2a2a2a">Label</div>
<div class="a" style="left:265px;top:170px;width:120px;height:25px;border:1px solid #d4d4d4;border-radius:4px;background:#fff"></div>
<div class="t" style="left:268.4px;top:175.1px;font-size:14.1px;color:#1a1a1a">Timestamp</div>
<div class="t" style="left:265px;top:205.7px;font-size:13.4px;color:#2a2a2a">Alias</div>
<div class="a" style="left:265px;top:221px;width:120px;height:25px;border:1px solid #e3e3e3;border-radius:4px;background:#f7f7f7"></div>
<div class="t" style="left:267.6px;top:227px;font-size:13.4px;color:#9a9a9a">y_axis_3</div>
<div class="t" style="left:265px;top:263.5px;font-size:13.9px;color:#1a1a1a">Sort By:</div>
<div class="a" style="left:265px;top:281px;width:116px;height:38px;border:1px solid #d9d9d9;border-radius:6px;background:#fff;overflow:hidden">
  <div class="a" style="left:0;top:0;width:36px;height:36px;background:#813f99"></div>
  <div class="a" style="left:73px;top:0;width:1px;height:36px;background:#d9d9d9"></div>
</div>
<svg class="a" style="left:275px;top:291px" width="18" height="18" viewBox="0 0 18 18"><circle cx="8.6" cy="8.8" r="6.6" fill="none" stroke="#fff" stroke-width="1.9"/><path d="M13.2 4.2L4 13.4" stroke="#fff" stroke-width="1.9"/></svg>
<svg class="a" style="left:313px;top:291px" width="18" height="18" viewBox="0 0 18 18"><path d="M2.7 8.2V4Q2.7 2.1 4.75 2.1Q6.8 2.1 6.8 4V8.2M2.7 5.5h4.1" fill="none" stroke="#1a1a1a" stroke-width="1.5"/><path d="M2.4 10.6h4.6L2.6 15.7h4.7" fill="none" stroke="#1a1a1a" stroke-width="1.7" stroke-linejoin="miter"/><path d="M13.35 1.3V13" stroke="#1a1a1a" stroke-width="1.5"/><path d="M10.5 12.6h5.7l-2.85 3.9z" fill="#1a1a1a"/></svg>
<svg class="a" style="left:352px;top:291px" width="18" height="18" viewBox="0 0 18 18"><path d="M2.4 8.2V4Q2.4 2.1 4.45 2.1Q6.5 2.1 6.5 4V8.2M2.4 5.5h4.1" fill="none" stroke="#1a1a1a" stroke-width="1.5"/><path d="M2.1 10.6h4.6L2.3 15.7h4.7" fill="none" stroke="#1a1a1a" stroke-width="1.7" stroke-linejoin="miter"/><path d="M13.75 16.4V5" stroke="#1a1a1a" stroke-width="1.5"/><path d="M10.9 5.4h5.7l-2.85-3.9z" fill="#1a1a1a"/></svg>

<!-- tabs -->
<div class="a" style="left:405px;top:150px;width:595px;height:1px;background:#dcdcdc"></div>
<div class="a" style="left:702px;top:115px;width:298px;height:35px;background:#e8d9ea;border-radius:5px 5px 0 0;border-bottom:2px solid #111"></div>
<div class="t" style="left:419px;top:124.2px;font-size:14.3px;color:#3a3a3a">Build</div>
<div class="t" style="left:718.4px;top:124.7px;font-size:13.7px;color:#2a2a2a">Raw</div>

<div class="t" style="left:405.7px;top:161.8px;font-size:14px;color:#1a1a1a">Query</div>
<div class="t" style="left:405.5px;top:181.7px;font-size:12.1px;color:#2a2a2a">Write a SQL query for complex actions.</div>
<div class="a" style="left:405px;top:198px;width:583px;height:132px;border:1px solid #c4c4c4;border-radius:4px;background:#fff"></div>
<div class="t" style="left:408.6px;top:204.5px;font-size:13.8px;color:#1a1a1a">ROUND(100.0 * SUM(CASE WHEN COALESCE(severity, 0) &gt;= 4 THEN 1 ELSE 0</div>
<div class="t" style="left:408.6px;top:225.3px;font-size:13.8px;color:#1a1a1a">END)/COUNT(_timestamp), 2)</div>
<svg class="a" style="left:977px;top:318px" width="9" height="9" viewBox="0 0 9 9"><path d="M8 2L2 8M8 5.5L5.5 8" stroke="#777" stroke-width="1"/></svg>

<div class="t" style="left:405.7px;top:353.6px;font-size:13.5px;color:#1a1a1a;font-weight:bold">Having</div>
<div class="a" style="left:460px;top:344px;width:66px;height:34px;border:1px solid #dcdcdc;border-radius:6px;background:#fff"></div>
<svg class="a" style="left:470px;top:355px" width="12" height="12" viewBox="0 0 12 12"><path d="M6 1v10M1 6h10" stroke="#1a1a1a" stroke-width="1.4"/></svg>
<div class="t" style="left:491px;top:352.8px;font-size:14.4px;color:#1a1a1a">Add</div>
<!-- /POPUP -->


</body></html>
